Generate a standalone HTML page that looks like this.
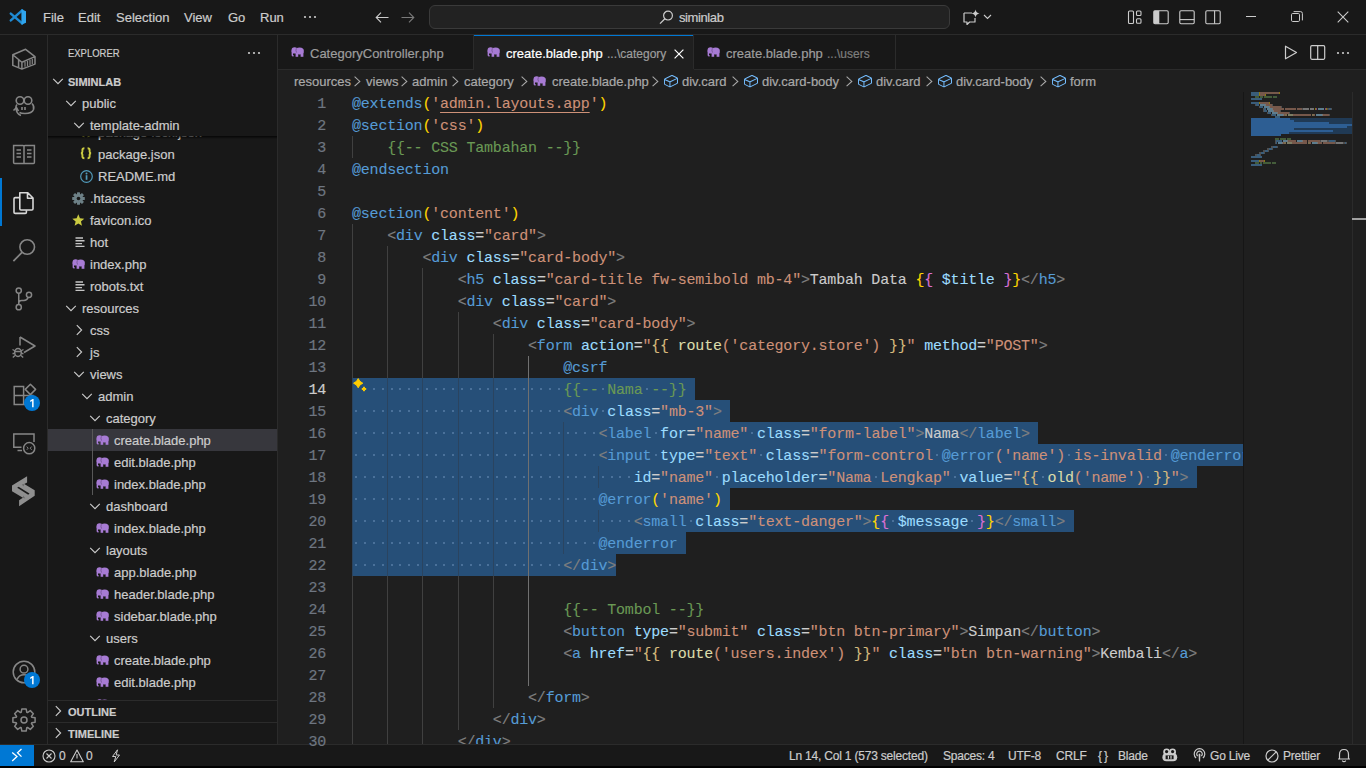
<!DOCTYPE html><html><head><meta charset="utf-8"><style>
*{box-sizing:border-box}
html,body{margin:0;padding:0}
body{width:1366px;height:768px;overflow:hidden;background:#000;position:relative;font-family:"Liberation Sans",sans-serif;color:#cccccc;-webkit-text-stroke:0.2px}
.a{position:absolute}
.t{position:absolute;white-space:pre}
svg{position:absolute;overflow:visible}
#code{position:absolute;left:352px;top:92px;width:891px;height:652px;overflow:hidden;font-family:"Liberation Mono",monospace;font-size:15px;letter-spacing:-0.2px;line-height:22px;white-space:pre}
.ln{position:absolute;left:0;height:22px}
.num{position:absolute;font-family:"Liberation Mono",monospace;font-size:15px;letter-spacing:-0.2px;line-height:22px;color:#6e7681;text-align:right;width:60px;left:266px}
.g{position:absolute;width:1px}
.sel{position:absolute;background:#264f78}
.tree{position:absolute;height:22px;font-size:13px;line-height:22px;color:#cccccc;white-space:pre}
.bc{position:absolute;top:71px;height:22px;line-height:22px;font-size:13px;color:#a9a9a9;white-space:pre}
.sb{position:absolute;top:746px;height:21px;line-height:21px;font-size:12px;color:#cccccc;white-space:pre;letter-spacing:-0.2px}
.mm{position:absolute;height:2px}
</style></head><body>
<div class="a" style="left:0px;top:0px;width:1366px;height:34px;background:#181818;"></div>
<div class="a" style="left:0px;top:34px;width:1366px;height:1px;background:#2b2b2b;"></div>
<div class="a" style="left:0px;top:35px;width:47px;height:709px;background:#181818;"></div>
<div class="a" style="left:47px;top:35px;width:1px;height:709px;background:#2b2b2b;"></div>
<div class="a" style="left:48px;top:35px;width:229px;height:709px;background:#181818;"></div>
<div class="a" style="left:277px;top:35px;width:1px;height:709px;background:#2b2b2b;"></div>
<div class="a" style="left:278px;top:35px;width:1088px;height:709px;background:#1f1f1f;"></div>
<div class="a" style="left:278px;top:35px;width:1088px;height:34px;background:#181818;"></div>
<div class="a" style="left:278px;top:69px;width:1088px;height:1px;background:#2b2b2b;"></div>
<div class="a" style="left:0px;top:744px;width:1366px;height:1px;background:#2b2b2b;"></div>
<div class="a" style="left:0px;top:745px;width:1366px;height:21px;background:#181818;"></div>
<div class="a" style="left:0px;top:745px;width:34px;height:21px;background:#0078d4;"></div>
<div class="num" style="top:94px;color:#6e7681">1</div>
<div class="num" style="top:116px;color:#6e7681">2</div>
<div class="num" style="top:138px;color:#6e7681">3</div>
<div class="num" style="top:160px;color:#6e7681">4</div>
<div class="num" style="top:182px;color:#6e7681">5</div>
<div class="num" style="top:204px;color:#6e7681">6</div>
<div class="num" style="top:226px;color:#6e7681">7</div>
<div class="num" style="top:248px;color:#6e7681">8</div>
<div class="num" style="top:270px;color:#6e7681">9</div>
<div class="num" style="top:292px;color:#6e7681">10</div>
<div class="num" style="top:314px;color:#6e7681">11</div>
<div class="num" style="top:336px;color:#6e7681">12</div>
<div class="num" style="top:358px;color:#6e7681">13</div>
<div class="num" style="top:380px;color:#cccccc">14</div>
<div class="num" style="top:402px;color:#6e7681">15</div>
<div class="num" style="top:424px;color:#6e7681">16</div>
<div class="num" style="top:446px;color:#6e7681">17</div>
<div class="num" style="top:468px;color:#6e7681">18</div>
<div class="num" style="top:490px;color:#6e7681">19</div>
<div class="num" style="top:512px;color:#6e7681">20</div>
<div class="num" style="top:534px;color:#6e7681">21</div>
<div class="num" style="top:556px;color:#6e7681">22</div>
<div class="num" style="top:578px;color:#6e7681">23</div>
<div class="num" style="top:600px;color:#6e7681">24</div>
<div class="num" style="top:622px;color:#6e7681">25</div>
<div class="num" style="top:644px;color:#6e7681">26</div>
<div class="num" style="top:666px;color:#6e7681">27</div>
<div class="num" style="top:688px;color:#6e7681">28</div>
<div class="num" style="top:710px;color:#6e7681">29</div>
<div class="num" style="top:732px;color:#6e7681">30</div>
<div class="a" style="left:278px;top:92px;width:965px;height:652px;overflow:hidden">
<div class="sel" style="left:74px;top:286px;width:343.2px;height:22px"></div>
<div class="sel" style="left:74px;top:308px;width:378.4px;height:22px"></div>
<div class="sel" style="left:74px;top:330px;width:686.4px;height:22px"></div>
<div class="sel" style="left:74px;top:352px;width:915.2px;height:22px"></div>
<div class="sel" style="left:74px;top:374px;width:844.8px;height:22px"></div>
<div class="sel" style="left:74px;top:396px;width:378.4px;height:22px"></div>
<div class="sel" style="left:74px;top:418px;width:721.6px;height:22px"></div>
<div class="sel" style="left:74px;top:440px;width:334.4px;height:22px"></div>
<div class="sel" style="left:74px;top:462px;width:264.0px;height:22px"></div>
<div class="a" style="left:95.0px;top:296px;width:2px;height:2px;background:#4a719a"></div><div class="a" style="left:103.8px;top:296px;width:2px;height:2px;background:#4a719a"></div><div class="a" style="left:112.6px;top:296px;width:2px;height:2px;background:#4a719a"></div><div class="a" style="left:121.4px;top:296px;width:2px;height:2px;background:#4a719a"></div><div class="a" style="left:130.2px;top:296px;width:2px;height:2px;background:#4a719a"></div><div class="a" style="left:139.0px;top:296px;width:2px;height:2px;background:#4a719a"></div><div class="a" style="left:147.8px;top:296px;width:2px;height:2px;background:#4a719a"></div><div class="a" style="left:156.6px;top:296px;width:2px;height:2px;background:#4a719a"></div><div class="a" style="left:165.4px;top:296px;width:2px;height:2px;background:#4a719a"></div><div class="a" style="left:174.2px;top:296px;width:2px;height:2px;background:#4a719a"></div><div class="a" style="left:183.0px;top:296px;width:2px;height:2px;background:#4a719a"></div><div class="a" style="left:191.8px;top:296px;width:2px;height:2px;background:#4a719a"></div><div class="a" style="left:200.6px;top:296px;width:2px;height:2px;background:#4a719a"></div><div class="a" style="left:209.4px;top:296px;width:2px;height:2px;background:#4a719a"></div><div class="a" style="left:218.2px;top:296px;width:2px;height:2px;background:#4a719a"></div><div class="a" style="left:227.0px;top:296px;width:2px;height:2px;background:#4a719a"></div><div class="a" style="left:235.8px;top:296px;width:2px;height:2px;background:#4a719a"></div><div class="a" style="left:244.6px;top:296px;width:2px;height:2px;background:#4a719a"></div><div class="a" style="left:253.4px;top:296px;width:2px;height:2px;background:#4a719a"></div><div class="a" style="left:262.2px;top:296px;width:2px;height:2px;background:#4a719a"></div><div class="a" style="left:271.0px;top:296px;width:2px;height:2px;background:#4a719a"></div><div class="a" style="left:279.8px;top:296px;width:2px;height:2px;background:#4a719a"></div><div class="a" style="left:323.8px;top:296px;width:2px;height:2px;background:#4a719a"></div><div class="a" style="left:367.8px;top:296px;width:2px;height:2px;background:#4a719a"></div><div class="a" style="left:77.4px;top:318px;width:2px;height:2px;background:#4a719a"></div><div class="a" style="left:86.2px;top:318px;width:2px;height:2px;background:#4a719a"></div><div class="a" style="left:95.0px;top:318px;width:2px;height:2px;background:#4a719a"></div><div class="a" style="left:103.8px;top:318px;width:2px;height:2px;background:#4a719a"></div><div class="a" style="left:112.6px;top:318px;width:2px;height:2px;background:#4a719a"></div><div class="a" style="left:121.4px;top:318px;width:2px;height:2px;background:#4a719a"></div><div class="a" style="left:130.2px;top:318px;width:2px;height:2px;background:#4a719a"></div><div class="a" style="left:139.0px;top:318px;width:2px;height:2px;background:#4a719a"></div><div class="a" style="left:147.8px;top:318px;width:2px;height:2px;background:#4a719a"></div><div class="a" style="left:156.6px;top:318px;width:2px;height:2px;background:#4a719a"></div><div class="a" style="left:165.4px;top:318px;width:2px;height:2px;background:#4a719a"></div><div class="a" style="left:174.2px;top:318px;width:2px;height:2px;background:#4a719a"></div><div class="a" style="left:183.0px;top:318px;width:2px;height:2px;background:#4a719a"></div><div class="a" style="left:191.8px;top:318px;width:2px;height:2px;background:#4a719a"></div><div class="a" style="left:200.6px;top:318px;width:2px;height:2px;background:#4a719a"></div><div class="a" style="left:209.4px;top:318px;width:2px;height:2px;background:#4a719a"></div><div class="a" style="left:218.2px;top:318px;width:2px;height:2px;background:#4a719a"></div><div class="a" style="left:227.0px;top:318px;width:2px;height:2px;background:#4a719a"></div><div class="a" style="left:235.8px;top:318px;width:2px;height:2px;background:#4a719a"></div><div class="a" style="left:244.6px;top:318px;width:2px;height:2px;background:#4a719a"></div><div class="a" style="left:253.4px;top:318px;width:2px;height:2px;background:#4a719a"></div><div class="a" style="left:262.2px;top:318px;width:2px;height:2px;background:#4a719a"></div><div class="a" style="left:271.0px;top:318px;width:2px;height:2px;background:#4a719a"></div><div class="a" style="left:279.8px;top:318px;width:2px;height:2px;background:#4a719a"></div><div class="a" style="left:323.8px;top:318px;width:2px;height:2px;background:#4a719a"></div><div class="a" style="left:77.4px;top:340px;width:2px;height:2px;background:#4a719a"></div><div class="a" style="left:86.2px;top:340px;width:2px;height:2px;background:#4a719a"></div><div class="a" style="left:95.0px;top:340px;width:2px;height:2px;background:#4a719a"></div><div class="a" style="left:103.8px;top:340px;width:2px;height:2px;background:#4a719a"></div><div class="a" style="left:112.6px;top:340px;width:2px;height:2px;background:#4a719a"></div><div class="a" style="left:121.4px;top:340px;width:2px;height:2px;background:#4a719a"></div><div class="a" style="left:130.2px;top:340px;width:2px;height:2px;background:#4a719a"></div><div class="a" style="left:139.0px;top:340px;width:2px;height:2px;background:#4a719a"></div><div class="a" style="left:147.8px;top:340px;width:2px;height:2px;background:#4a719a"></div><div class="a" style="left:156.6px;top:340px;width:2px;height:2px;background:#4a719a"></div><div class="a" style="left:165.4px;top:340px;width:2px;height:2px;background:#4a719a"></div><div class="a" style="left:174.2px;top:340px;width:2px;height:2px;background:#4a719a"></div><div class="a" style="left:183.0px;top:340px;width:2px;height:2px;background:#4a719a"></div><div class="a" style="left:191.8px;top:340px;width:2px;height:2px;background:#4a719a"></div><div class="a" style="left:200.6px;top:340px;width:2px;height:2px;background:#4a719a"></div><div class="a" style="left:209.4px;top:340px;width:2px;height:2px;background:#4a719a"></div><div class="a" style="left:218.2px;top:340px;width:2px;height:2px;background:#4a719a"></div><div class="a" style="left:227.0px;top:340px;width:2px;height:2px;background:#4a719a"></div><div class="a" style="left:235.8px;top:340px;width:2px;height:2px;background:#4a719a"></div><div class="a" style="left:244.6px;top:340px;width:2px;height:2px;background:#4a719a"></div><div class="a" style="left:253.4px;top:340px;width:2px;height:2px;background:#4a719a"></div><div class="a" style="left:262.2px;top:340px;width:2px;height:2px;background:#4a719a"></div><div class="a" style="left:271.0px;top:340px;width:2px;height:2px;background:#4a719a"></div><div class="a" style="left:279.8px;top:340px;width:2px;height:2px;background:#4a719a"></div><div class="a" style="left:288.6px;top:340px;width:2px;height:2px;background:#4a719a"></div><div class="a" style="left:297.4px;top:340px;width:2px;height:2px;background:#4a719a"></div><div class="a" style="left:306.2px;top:340px;width:2px;height:2px;background:#4a719a"></div><div class="a" style="left:315.0px;top:340px;width:2px;height:2px;background:#4a719a"></div><div class="a" style="left:376.6px;top:340px;width:2px;height:2px;background:#4a719a"></div><div class="a" style="left:473.4px;top:340px;width:2px;height:2px;background:#4a719a"></div><div class="a" style="left:77.4px;top:362px;width:2px;height:2px;background:#4a719a"></div><div class="a" style="left:86.2px;top:362px;width:2px;height:2px;background:#4a719a"></div><div class="a" style="left:95.0px;top:362px;width:2px;height:2px;background:#4a719a"></div><div class="a" style="left:103.8px;top:362px;width:2px;height:2px;background:#4a719a"></div><div class="a" style="left:112.6px;top:362px;width:2px;height:2px;background:#4a719a"></div><div class="a" style="left:121.4px;top:362px;width:2px;height:2px;background:#4a719a"></div><div class="a" style="left:130.2px;top:362px;width:2px;height:2px;background:#4a719a"></div><div class="a" style="left:139.0px;top:362px;width:2px;height:2px;background:#4a719a"></div><div class="a" style="left:147.8px;top:362px;width:2px;height:2px;background:#4a719a"></div><div class="a" style="left:156.6px;top:362px;width:2px;height:2px;background:#4a719a"></div><div class="a" style="left:165.4px;top:362px;width:2px;height:2px;background:#4a719a"></div><div class="a" style="left:174.2px;top:362px;width:2px;height:2px;background:#4a719a"></div><div class="a" style="left:183.0px;top:362px;width:2px;height:2px;background:#4a719a"></div><div class="a" style="left:191.8px;top:362px;width:2px;height:2px;background:#4a719a"></div><div class="a" style="left:200.6px;top:362px;width:2px;height:2px;background:#4a719a"></div><div class="a" style="left:209.4px;top:362px;width:2px;height:2px;background:#4a719a"></div><div class="a" style="left:218.2px;top:362px;width:2px;height:2px;background:#4a719a"></div><div class="a" style="left:227.0px;top:362px;width:2px;height:2px;background:#4a719a"></div><div class="a" style="left:235.8px;top:362px;width:2px;height:2px;background:#4a719a"></div><div class="a" style="left:244.6px;top:362px;width:2px;height:2px;background:#4a719a"></div><div class="a" style="left:253.4px;top:362px;width:2px;height:2px;background:#4a719a"></div><div class="a" style="left:262.2px;top:362px;width:2px;height:2px;background:#4a719a"></div><div class="a" style="left:271.0px;top:362px;width:2px;height:2px;background:#4a719a"></div><div class="a" style="left:279.8px;top:362px;width:2px;height:2px;background:#4a719a"></div><div class="a" style="left:288.6px;top:362px;width:2px;height:2px;background:#4a719a"></div><div class="a" style="left:297.4px;top:362px;width:2px;height:2px;background:#4a719a"></div><div class="a" style="left:306.2px;top:362px;width:2px;height:2px;background:#4a719a"></div><div class="a" style="left:315.0px;top:362px;width:2px;height:2px;background:#4a719a"></div><div class="a" style="left:376.6px;top:362px;width:2px;height:2px;background:#4a719a"></div><div class="a" style="left:482.2px;top:362px;width:2px;height:2px;background:#4a719a"></div><div class="a" style="left:658.2px;top:362px;width:2px;height:2px;background:#4a719a"></div><div class="a" style="left:790.2px;top:362px;width:2px;height:2px;background:#4a719a"></div><div class="a" style="left:887.0px;top:362px;width:2px;height:2px;background:#4a719a"></div><div class="a" style="left:77.4px;top:384px;width:2px;height:2px;background:#4a719a"></div><div class="a" style="left:86.2px;top:384px;width:2px;height:2px;background:#4a719a"></div><div class="a" style="left:95.0px;top:384px;width:2px;height:2px;background:#4a719a"></div><div class="a" style="left:103.8px;top:384px;width:2px;height:2px;background:#4a719a"></div><div class="a" style="left:112.6px;top:384px;width:2px;height:2px;background:#4a719a"></div><div class="a" style="left:121.4px;top:384px;width:2px;height:2px;background:#4a719a"></div><div class="a" style="left:130.2px;top:384px;width:2px;height:2px;background:#4a719a"></div><div class="a" style="left:139.0px;top:384px;width:2px;height:2px;background:#4a719a"></div><div class="a" style="left:147.8px;top:384px;width:2px;height:2px;background:#4a719a"></div><div class="a" style="left:156.6px;top:384px;width:2px;height:2px;background:#4a719a"></div><div class="a" style="left:165.4px;top:384px;width:2px;height:2px;background:#4a719a"></div><div class="a" style="left:174.2px;top:384px;width:2px;height:2px;background:#4a719a"></div><div class="a" style="left:183.0px;top:384px;width:2px;height:2px;background:#4a719a"></div><div class="a" style="left:191.8px;top:384px;width:2px;height:2px;background:#4a719a"></div><div class="a" style="left:200.6px;top:384px;width:2px;height:2px;background:#4a719a"></div><div class="a" style="left:209.4px;top:384px;width:2px;height:2px;background:#4a719a"></div><div class="a" style="left:218.2px;top:384px;width:2px;height:2px;background:#4a719a"></div><div class="a" style="left:227.0px;top:384px;width:2px;height:2px;background:#4a719a"></div><div class="a" style="left:235.8px;top:384px;width:2px;height:2px;background:#4a719a"></div><div class="a" style="left:244.6px;top:384px;width:2px;height:2px;background:#4a719a"></div><div class="a" style="left:253.4px;top:384px;width:2px;height:2px;background:#4a719a"></div><div class="a" style="left:262.2px;top:384px;width:2px;height:2px;background:#4a719a"></div><div class="a" style="left:271.0px;top:384px;width:2px;height:2px;background:#4a719a"></div><div class="a" style="left:279.8px;top:384px;width:2px;height:2px;background:#4a719a"></div><div class="a" style="left:288.6px;top:384px;width:2px;height:2px;background:#4a719a"></div><div class="a" style="left:297.4px;top:384px;width:2px;height:2px;background:#4a719a"></div><div class="a" style="left:306.2px;top:384px;width:2px;height:2px;background:#4a719a"></div><div class="a" style="left:315.0px;top:384px;width:2px;height:2px;background:#4a719a"></div><div class="a" style="left:323.8px;top:384px;width:2px;height:2px;background:#4a719a"></div><div class="a" style="left:332.6px;top:384px;width:2px;height:2px;background:#4a719a"></div><div class="a" style="left:341.4px;top:384px;width:2px;height:2px;background:#4a719a"></div><div class="a" style="left:350.2px;top:384px;width:2px;height:2px;background:#4a719a"></div><div class="a" style="left:438.2px;top:384px;width:2px;height:2px;background:#4a719a"></div><div class="a" style="left:596.6px;top:384px;width:2px;height:2px;background:#4a719a"></div><div class="a" style="left:675.8px;top:384px;width:2px;height:2px;background:#4a719a"></div><div class="a" style="left:763.8px;top:384px;width:2px;height:2px;background:#4a719a"></div><div class="a" style="left:869.4px;top:384px;width:2px;height:2px;background:#4a719a"></div><div class="a" style="left:77.4px;top:406px;width:2px;height:2px;background:#4a719a"></div><div class="a" style="left:86.2px;top:406px;width:2px;height:2px;background:#4a719a"></div><div class="a" style="left:95.0px;top:406px;width:2px;height:2px;background:#4a719a"></div><div class="a" style="left:103.8px;top:406px;width:2px;height:2px;background:#4a719a"></div><div class="a" style="left:112.6px;top:406px;width:2px;height:2px;background:#4a719a"></div><div class="a" style="left:121.4px;top:406px;width:2px;height:2px;background:#4a719a"></div><div class="a" style="left:130.2px;top:406px;width:2px;height:2px;background:#4a719a"></div><div class="a" style="left:139.0px;top:406px;width:2px;height:2px;background:#4a719a"></div><div class="a" style="left:147.8px;top:406px;width:2px;height:2px;background:#4a719a"></div><div class="a" style="left:156.6px;top:406px;width:2px;height:2px;background:#4a719a"></div><div class="a" style="left:165.4px;top:406px;width:2px;height:2px;background:#4a719a"></div><div class="a" style="left:174.2px;top:406px;width:2px;height:2px;background:#4a719a"></div><div class="a" style="left:183.0px;top:406px;width:2px;height:2px;background:#4a719a"></div><div class="a" style="left:191.8px;top:406px;width:2px;height:2px;background:#4a719a"></div><div class="a" style="left:200.6px;top:406px;width:2px;height:2px;background:#4a719a"></div><div class="a" style="left:209.4px;top:406px;width:2px;height:2px;background:#4a719a"></div><div class="a" style="left:218.2px;top:406px;width:2px;height:2px;background:#4a719a"></div><div class="a" style="left:227.0px;top:406px;width:2px;height:2px;background:#4a719a"></div><div class="a" style="left:235.8px;top:406px;width:2px;height:2px;background:#4a719a"></div><div class="a" style="left:244.6px;top:406px;width:2px;height:2px;background:#4a719a"></div><div class="a" style="left:253.4px;top:406px;width:2px;height:2px;background:#4a719a"></div><div class="a" style="left:262.2px;top:406px;width:2px;height:2px;background:#4a719a"></div><div class="a" style="left:271.0px;top:406px;width:2px;height:2px;background:#4a719a"></div><div class="a" style="left:279.8px;top:406px;width:2px;height:2px;background:#4a719a"></div><div class="a" style="left:288.6px;top:406px;width:2px;height:2px;background:#4a719a"></div><div class="a" style="left:297.4px;top:406px;width:2px;height:2px;background:#4a719a"></div><div class="a" style="left:306.2px;top:406px;width:2px;height:2px;background:#4a719a"></div><div class="a" style="left:315.0px;top:406px;width:2px;height:2px;background:#4a719a"></div><div class="a" style="left:77.4px;top:428px;width:2px;height:2px;background:#4a719a"></div><div class="a" style="left:86.2px;top:428px;width:2px;height:2px;background:#4a719a"></div><div class="a" style="left:95.0px;top:428px;width:2px;height:2px;background:#4a719a"></div><div class="a" style="left:103.8px;top:428px;width:2px;height:2px;background:#4a719a"></div><div class="a" style="left:112.6px;top:428px;width:2px;height:2px;background:#4a719a"></div><div class="a" style="left:121.4px;top:428px;width:2px;height:2px;background:#4a719a"></div><div class="a" style="left:130.2px;top:428px;width:2px;height:2px;background:#4a719a"></div><div class="a" style="left:139.0px;top:428px;width:2px;height:2px;background:#4a719a"></div><div class="a" style="left:147.8px;top:428px;width:2px;height:2px;background:#4a719a"></div><div class="a" style="left:156.6px;top:428px;width:2px;height:2px;background:#4a719a"></div><div class="a" style="left:165.4px;top:428px;width:2px;height:2px;background:#4a719a"></div><div class="a" style="left:174.2px;top:428px;width:2px;height:2px;background:#4a719a"></div><div class="a" style="left:183.0px;top:428px;width:2px;height:2px;background:#4a719a"></div><div class="a" style="left:191.8px;top:428px;width:2px;height:2px;background:#4a719a"></div><div class="a" style="left:200.6px;top:428px;width:2px;height:2px;background:#4a719a"></div><div class="a" style="left:209.4px;top:428px;width:2px;height:2px;background:#4a719a"></div><div class="a" style="left:218.2px;top:428px;width:2px;height:2px;background:#4a719a"></div><div class="a" style="left:227.0px;top:428px;width:2px;height:2px;background:#4a719a"></div><div class="a" style="left:235.8px;top:428px;width:2px;height:2px;background:#4a719a"></div><div class="a" style="left:244.6px;top:428px;width:2px;height:2px;background:#4a719a"></div><div class="a" style="left:253.4px;top:428px;width:2px;height:2px;background:#4a719a"></div><div class="a" style="left:262.2px;top:428px;width:2px;height:2px;background:#4a719a"></div><div class="a" style="left:271.0px;top:428px;width:2px;height:2px;background:#4a719a"></div><div class="a" style="left:279.8px;top:428px;width:2px;height:2px;background:#4a719a"></div><div class="a" style="left:288.6px;top:428px;width:2px;height:2px;background:#4a719a"></div><div class="a" style="left:297.4px;top:428px;width:2px;height:2px;background:#4a719a"></div><div class="a" style="left:306.2px;top:428px;width:2px;height:2px;background:#4a719a"></div><div class="a" style="left:315.0px;top:428px;width:2px;height:2px;background:#4a719a"></div><div class="a" style="left:323.8px;top:428px;width:2px;height:2px;background:#4a719a"></div><div class="a" style="left:332.6px;top:428px;width:2px;height:2px;background:#4a719a"></div><div class="a" style="left:341.4px;top:428px;width:2px;height:2px;background:#4a719a"></div><div class="a" style="left:350.2px;top:428px;width:2px;height:2px;background:#4a719a"></div><div class="a" style="left:411.8px;top:428px;width:2px;height:2px;background:#4a719a"></div><div class="a" style="left:614.2px;top:428px;width:2px;height:2px;background:#4a719a"></div><div class="a" style="left:693.4px;top:428px;width:2px;height:2px;background:#4a719a"></div><div class="a" style="left:77.4px;top:450px;width:2px;height:2px;background:#4a719a"></div><div class="a" style="left:86.2px;top:450px;width:2px;height:2px;background:#4a719a"></div><div class="a" style="left:95.0px;top:450px;width:2px;height:2px;background:#4a719a"></div><div class="a" style="left:103.8px;top:450px;width:2px;height:2px;background:#4a719a"></div><div class="a" style="left:112.6px;top:450px;width:2px;height:2px;background:#4a719a"></div><div class="a" style="left:121.4px;top:450px;width:2px;height:2px;background:#4a719a"></div><div class="a" style="left:130.2px;top:450px;width:2px;height:2px;background:#4a719a"></div><div class="a" style="left:139.0px;top:450px;width:2px;height:2px;background:#4a719a"></div><div class="a" style="left:147.8px;top:450px;width:2px;height:2px;background:#4a719a"></div><div class="a" style="left:156.6px;top:450px;width:2px;height:2px;background:#4a719a"></div><div class="a" style="left:165.4px;top:450px;width:2px;height:2px;background:#4a719a"></div><div class="a" style="left:174.2px;top:450px;width:2px;height:2px;background:#4a719a"></div><div class="a" style="left:183.0px;top:450px;width:2px;height:2px;background:#4a719a"></div><div class="a" style="left:191.8px;top:450px;width:2px;height:2px;background:#4a719a"></div><div class="a" style="left:200.6px;top:450px;width:2px;height:2px;background:#4a719a"></div><div class="a" style="left:209.4px;top:450px;width:2px;height:2px;background:#4a719a"></div><div class="a" style="left:218.2px;top:450px;width:2px;height:2px;background:#4a719a"></div><div class="a" style="left:227.0px;top:450px;width:2px;height:2px;background:#4a719a"></div><div class="a" style="left:235.8px;top:450px;width:2px;height:2px;background:#4a719a"></div><div class="a" style="left:244.6px;top:450px;width:2px;height:2px;background:#4a719a"></div><div class="a" style="left:253.4px;top:450px;width:2px;height:2px;background:#4a719a"></div><div class="a" style="left:262.2px;top:450px;width:2px;height:2px;background:#4a719a"></div><div class="a" style="left:271.0px;top:450px;width:2px;height:2px;background:#4a719a"></div><div class="a" style="left:279.8px;top:450px;width:2px;height:2px;background:#4a719a"></div><div class="a" style="left:288.6px;top:450px;width:2px;height:2px;background:#4a719a"></div><div class="a" style="left:297.4px;top:450px;width:2px;height:2px;background:#4a719a"></div><div class="a" style="left:306.2px;top:450px;width:2px;height:2px;background:#4a719a"></div><div class="a" style="left:315.0px;top:450px;width:2px;height:2px;background:#4a719a"></div><div class="a" style="left:77.4px;top:472px;width:2px;height:2px;background:#4a719a"></div><div class="a" style="left:86.2px;top:472px;width:2px;height:2px;background:#4a719a"></div><div class="a" style="left:95.0px;top:472px;width:2px;height:2px;background:#4a719a"></div><div class="a" style="left:103.8px;top:472px;width:2px;height:2px;background:#4a719a"></div><div class="a" style="left:112.6px;top:472px;width:2px;height:2px;background:#4a719a"></div><div class="a" style="left:121.4px;top:472px;width:2px;height:2px;background:#4a719a"></div><div class="a" style="left:130.2px;top:472px;width:2px;height:2px;background:#4a719a"></div><div class="a" style="left:139.0px;top:472px;width:2px;height:2px;background:#4a719a"></div><div class="a" style="left:147.8px;top:472px;width:2px;height:2px;background:#4a719a"></div><div class="a" style="left:156.6px;top:472px;width:2px;height:2px;background:#4a719a"></div><div class="a" style="left:165.4px;top:472px;width:2px;height:2px;background:#4a719a"></div><div class="a" style="left:174.2px;top:472px;width:2px;height:2px;background:#4a719a"></div><div class="a" style="left:183.0px;top:472px;width:2px;height:2px;background:#4a719a"></div><div class="a" style="left:191.8px;top:472px;width:2px;height:2px;background:#4a719a"></div><div class="a" style="left:200.6px;top:472px;width:2px;height:2px;background:#4a719a"></div><div class="a" style="left:209.4px;top:472px;width:2px;height:2px;background:#4a719a"></div><div class="a" style="left:218.2px;top:472px;width:2px;height:2px;background:#4a719a"></div><div class="a" style="left:227.0px;top:472px;width:2px;height:2px;background:#4a719a"></div><div class="a" style="left:235.8px;top:472px;width:2px;height:2px;background:#4a719a"></div><div class="a" style="left:244.6px;top:472px;width:2px;height:2px;background:#4a719a"></div><div class="a" style="left:253.4px;top:472px;width:2px;height:2px;background:#4a719a"></div><div class="a" style="left:262.2px;top:472px;width:2px;height:2px;background:#4a719a"></div><div class="a" style="left:271.0px;top:472px;width:2px;height:2px;background:#4a719a"></div><div class="a" style="left:279.8px;top:472px;width:2px;height:2px;background:#4a719a"></div>
<div class="g" style="left:74px;top:44px;height:22px;background:#404040"></div>
<div class="g" style="left:74px;top:132px;height:22px;background:#404040"></div>
<div class="g" style="left:74px;top:154px;height:22px;background:#404040"></div>
<div class="g" style="left:109px;top:154px;height:22px;background:#404040"></div>
<div class="g" style="left:74px;top:176px;height:22px;background:#404040"></div>
<div class="g" style="left:109px;top:176px;height:22px;background:#404040"></div>
<div class="g" style="left:144px;top:176px;height:22px;background:#404040"></div>
<div class="g" style="left:74px;top:198px;height:22px;background:#404040"></div>
<div class="g" style="left:109px;top:198px;height:22px;background:#404040"></div>
<div class="g" style="left:144px;top:198px;height:22px;background:#404040"></div>
<div class="g" style="left:74px;top:220px;height:22px;background:#404040"></div>
<div class="g" style="left:109px;top:220px;height:22px;background:#404040"></div>
<div class="g" style="left:144px;top:220px;height:22px;background:#404040"></div>
<div class="g" style="left:180px;top:220px;height:22px;background:#404040"></div>
<div class="g" style="left:74px;top:242px;height:22px;background:#404040"></div>
<div class="g" style="left:109px;top:242px;height:22px;background:#404040"></div>
<div class="g" style="left:144px;top:242px;height:22px;background:#404040"></div>
<div class="g" style="left:180px;top:242px;height:22px;background:#404040"></div>
<div class="g" style="left:215px;top:242px;height:22px;background:#404040"></div>
<div class="g" style="left:74px;top:264px;height:22px;background:#404040"></div>
<div class="g" style="left:109px;top:264px;height:22px;background:#404040"></div>
<div class="g" style="left:144px;top:264px;height:22px;background:#404040"></div>
<div class="g" style="left:180px;top:264px;height:22px;background:#404040"></div>
<div class="g" style="left:215px;top:264px;height:22px;background:#404040"></div>
<div class="g" style="left:250px;top:264px;height:22px;background:#707070"></div>
<div class="g" style="left:74px;top:286px;height:22px;background:#2a4460"></div>
<div class="g" style="left:109px;top:286px;height:22px;background:#2a4460"></div>
<div class="g" style="left:144px;top:286px;height:22px;background:#2a4460"></div>
<div class="g" style="left:180px;top:286px;height:22px;background:#2a4460"></div>
<div class="g" style="left:215px;top:286px;height:22px;background:#2a4460"></div>
<div class="g" style="left:250px;top:286px;height:22px;background:#707070"></div>
<div class="g" style="left:74px;top:308px;height:22px;background:#2a4460"></div>
<div class="g" style="left:109px;top:308px;height:22px;background:#2a4460"></div>
<div class="g" style="left:144px;top:308px;height:22px;background:#2a4460"></div>
<div class="g" style="left:180px;top:308px;height:22px;background:#2a4460"></div>
<div class="g" style="left:215px;top:308px;height:22px;background:#2a4460"></div>
<div class="g" style="left:250px;top:308px;height:22px;background:#707070"></div>
<div class="g" style="left:74px;top:330px;height:22px;background:#2a4460"></div>
<div class="g" style="left:109px;top:330px;height:22px;background:#2a4460"></div>
<div class="g" style="left:144px;top:330px;height:22px;background:#2a4460"></div>
<div class="g" style="left:180px;top:330px;height:22px;background:#2a4460"></div>
<div class="g" style="left:215px;top:330px;height:22px;background:#2a4460"></div>
<div class="g" style="left:250px;top:330px;height:22px;background:#707070"></div>
<div class="g" style="left:285px;top:330px;height:22px;background:#2a4460"></div>
<div class="g" style="left:74px;top:352px;height:22px;background:#2a4460"></div>
<div class="g" style="left:109px;top:352px;height:22px;background:#2a4460"></div>
<div class="g" style="left:144px;top:352px;height:22px;background:#2a4460"></div>
<div class="g" style="left:180px;top:352px;height:22px;background:#2a4460"></div>
<div class="g" style="left:215px;top:352px;height:22px;background:#2a4460"></div>
<div class="g" style="left:250px;top:352px;height:22px;background:#707070"></div>
<div class="g" style="left:285px;top:352px;height:22px;background:#2a4460"></div>
<div class="g" style="left:74px;top:374px;height:22px;background:#2a4460"></div>
<div class="g" style="left:109px;top:374px;height:22px;background:#2a4460"></div>
<div class="g" style="left:144px;top:374px;height:22px;background:#2a4460"></div>
<div class="g" style="left:180px;top:374px;height:22px;background:#2a4460"></div>
<div class="g" style="left:215px;top:374px;height:22px;background:#2a4460"></div>
<div class="g" style="left:250px;top:374px;height:22px;background:#707070"></div>
<div class="g" style="left:285px;top:374px;height:22px;background:#2a4460"></div>
<div class="g" style="left:320px;top:374px;height:22px;background:#2a4460"></div>
<div class="g" style="left:74px;top:396px;height:22px;background:#2a4460"></div>
<div class="g" style="left:109px;top:396px;height:22px;background:#2a4460"></div>
<div class="g" style="left:144px;top:396px;height:22px;background:#2a4460"></div>
<div class="g" style="left:180px;top:396px;height:22px;background:#2a4460"></div>
<div class="g" style="left:215px;top:396px;height:22px;background:#2a4460"></div>
<div class="g" style="left:250px;top:396px;height:22px;background:#707070"></div>
<div class="g" style="left:285px;top:396px;height:22px;background:#2a4460"></div>
<div class="g" style="left:74px;top:418px;height:22px;background:#2a4460"></div>
<div class="g" style="left:109px;top:418px;height:22px;background:#2a4460"></div>
<div class="g" style="left:144px;top:418px;height:22px;background:#2a4460"></div>
<div class="g" style="left:180px;top:418px;height:22px;background:#2a4460"></div>
<div class="g" style="left:215px;top:418px;height:22px;background:#2a4460"></div>
<div class="g" style="left:250px;top:418px;height:22px;background:#707070"></div>
<div class="g" style="left:285px;top:418px;height:22px;background:#2a4460"></div>
<div class="g" style="left:320px;top:418px;height:22px;background:#2a4460"></div>
<div class="g" style="left:74px;top:440px;height:22px;background:#2a4460"></div>
<div class="g" style="left:109px;top:440px;height:22px;background:#2a4460"></div>
<div class="g" style="left:144px;top:440px;height:22px;background:#2a4460"></div>
<div class="g" style="left:180px;top:440px;height:22px;background:#2a4460"></div>
<div class="g" style="left:215px;top:440px;height:22px;background:#2a4460"></div>
<div class="g" style="left:250px;top:440px;height:22px;background:#707070"></div>
<div class="g" style="left:285px;top:440px;height:22px;background:#2a4460"></div>
<div class="g" style="left:74px;top:462px;height:22px;background:#2a4460"></div>
<div class="g" style="left:109px;top:462px;height:22px;background:#2a4460"></div>
<div class="g" style="left:144px;top:462px;height:22px;background:#2a4460"></div>
<div class="g" style="left:180px;top:462px;height:22px;background:#2a4460"></div>
<div class="g" style="left:215px;top:462px;height:22px;background:#2a4460"></div>
<div class="g" style="left:250px;top:462px;height:22px;background:#707070"></div>
<div class="g" style="left:74px;top:484px;height:22px;background:#404040"></div>
<div class="g" style="left:109px;top:484px;height:22px;background:#404040"></div>
<div class="g" style="left:144px;top:484px;height:22px;background:#404040"></div>
<div class="g" style="left:180px;top:484px;height:22px;background:#404040"></div>
<div class="g" style="left:215px;top:484px;height:22px;background:#404040"></div>
<div class="g" style="left:250px;top:484px;height:22px;background:#707070"></div>
<div class="g" style="left:74px;top:506px;height:22px;background:#404040"></div>
<div class="g" style="left:109px;top:506px;height:22px;background:#404040"></div>
<div class="g" style="left:144px;top:506px;height:22px;background:#404040"></div>
<div class="g" style="left:180px;top:506px;height:22px;background:#404040"></div>
<div class="g" style="left:215px;top:506px;height:22px;background:#404040"></div>
<div class="g" style="left:250px;top:506px;height:22px;background:#707070"></div>
<div class="g" style="left:74px;top:528px;height:22px;background:#404040"></div>
<div class="g" style="left:109px;top:528px;height:22px;background:#404040"></div>
<div class="g" style="left:144px;top:528px;height:22px;background:#404040"></div>
<div class="g" style="left:180px;top:528px;height:22px;background:#404040"></div>
<div class="g" style="left:215px;top:528px;height:22px;background:#404040"></div>
<div class="g" style="left:250px;top:528px;height:22px;background:#707070"></div>
<div class="g" style="left:74px;top:550px;height:22px;background:#404040"></div>
<div class="g" style="left:109px;top:550px;height:22px;background:#404040"></div>
<div class="g" style="left:144px;top:550px;height:22px;background:#404040"></div>
<div class="g" style="left:180px;top:550px;height:22px;background:#404040"></div>
<div class="g" style="left:215px;top:550px;height:22px;background:#404040"></div>
<div class="g" style="left:250px;top:550px;height:22px;background:#707070"></div>
<div class="g" style="left:74px;top:572px;height:22px;background:#404040"></div>
<div class="g" style="left:109px;top:572px;height:22px;background:#404040"></div>
<div class="g" style="left:144px;top:572px;height:22px;background:#404040"></div>
<div class="g" style="left:180px;top:572px;height:22px;background:#404040"></div>
<div class="g" style="left:215px;top:572px;height:22px;background:#404040"></div>
<div class="g" style="left:250px;top:572px;height:22px;background:#707070"></div>
<div class="g" style="left:74px;top:594px;height:22px;background:#404040"></div>
<div class="g" style="left:109px;top:594px;height:22px;background:#404040"></div>
<div class="g" style="left:144px;top:594px;height:22px;background:#404040"></div>
<div class="g" style="left:180px;top:594px;height:22px;background:#404040"></div>
<div class="g" style="left:215px;top:594px;height:22px;background:#404040"></div>
<div class="g" style="left:74px;top:616px;height:22px;background:#404040"></div>
<div class="g" style="left:109px;top:616px;height:22px;background:#404040"></div>
<div class="g" style="left:144px;top:616px;height:22px;background:#404040"></div>
<div class="g" style="left:180px;top:616px;height:22px;background:#404040"></div>
<div class="g" style="left:74px;top:638px;height:22px;background:#404040"></div>
<div class="g" style="left:109px;top:638px;height:22px;background:#404040"></div>
<div class="g" style="left:144px;top:638px;height:22px;background:#404040"></div>
<div style="position:absolute;left:74px;top:0;font-family:'Liberation Mono',monospace;font-size:15px;letter-spacing:-0.2px;line-height:22px;white-space:pre;-webkit-text-stroke:0.1px">
<div class="ln" style="top:2px"><span style="color:#569CD6">@extends</span><span style="color:#FFD700">(</span><span style="color:#CE9178">'<span style="text-decoration:underline;text-underline-offset:4px">admin.layouts.app</span>'</span><span style="color:#FFD700">)</span></div>
<div class="ln" style="top:24px"><span style="color:#569CD6">@section</span><span style="color:#FFD700">(</span><span style="color:#CE9178">&#x27;css&#x27;</span><span style="color:#FFD700">)</span></div>
<div class="ln" style="top:46px"><span style="color:#CCCCCC">    </span><span style="color:#6A9955">{{-- CSS Tambahan --}}</span></div>
<div class="ln" style="top:68px"><span style="color:#569CD6">@endsection</span></div>
<div class="ln" style="top:90px"></div>
<div class="ln" style="top:112px"><span style="color:#569CD6">@section</span><span style="color:#FFD700">(</span><span style="color:#CE9178">&#x27;content&#x27;</span><span style="color:#FFD700">)</span></div>
<div class="ln" style="top:134px"><span style="color:#CCCCCC">    </span><span style="color:#808080">&lt;</span><span style="color:#569CD6">div</span><span style="color:#CCCCCC"> </span><span style="color:#9CDCFE">class</span><span style="color:#CCCCCC">=</span><span style="color:#CE9178">&quot;card&quot;</span><span style="color:#808080">&gt;</span></div>
<div class="ln" style="top:156px"><span style="color:#CCCCCC">        </span><span style="color:#808080">&lt;</span><span style="color:#569CD6">div</span><span style="color:#CCCCCC"> </span><span style="color:#9CDCFE">class</span><span style="color:#CCCCCC">=</span><span style="color:#CE9178">&quot;card-body&quot;</span><span style="color:#808080">&gt;</span></div>
<div class="ln" style="top:178px"><span style="color:#CCCCCC">            </span><span style="color:#808080">&lt;</span><span style="color:#569CD6">h5</span><span style="color:#CCCCCC"> </span><span style="color:#9CDCFE">class</span><span style="color:#CCCCCC">=</span><span style="color:#CE9178">&quot;card-title fw-semibold mb-4&quot;</span><span style="color:#808080">&gt;</span><span style="color:#CCCCCC">Tambah Data </span><span style="color:#FFD700">{</span><span style="color:#DA70D6">{</span><span style="color:#CCCCCC"> </span><span style="color:#9CDCFE">$title</span><span style="color:#CCCCCC"> </span><span style="color:#DA70D6">}</span><span style="color:#FFD700">}</span><span style="color:#808080">&lt;/</span><span style="color:#569CD6">h5</span><span style="color:#808080">&gt;</span></div>
<div class="ln" style="top:200px"><span style="color:#CCCCCC">            </span><span style="color:#808080">&lt;</span><span style="color:#569CD6">div</span><span style="color:#CCCCCC"> </span><span style="color:#9CDCFE">class</span><span style="color:#CCCCCC">=</span><span style="color:#CE9178">&quot;card&quot;</span><span style="color:#808080">&gt;</span></div>
<div class="ln" style="top:222px"><span style="color:#CCCCCC">                </span><span style="color:#808080">&lt;</span><span style="color:#569CD6">div</span><span style="color:#CCCCCC"> </span><span style="color:#9CDCFE">class</span><span style="color:#CCCCCC">=</span><span style="color:#CE9178">&quot;card-body&quot;</span><span style="color:#808080">&gt;</span></div>
<div class="ln" style="top:244px"><span style="color:#CCCCCC">                    </span><span style="color:#808080">&lt;</span><span style="color:#569CD6">form</span><span style="color:#CCCCCC"> </span><span style="color:#9CDCFE">action</span><span style="color:#CCCCCC">=</span><span style="color:#CE9178">&quot;</span><span style="color:#D7BA7D">{{</span><span style="color:#CCCCCC"> </span><span style="color:#DCDCAA">route</span><span style="color:#CE9178">(&#x27;category.store&#x27;)</span><span style="color:#CCCCCC"> </span><span style="color:#D7BA7D">}}</span><span style="color:#CE9178">&quot;</span><span style="color:#CCCCCC"> </span><span style="color:#9CDCFE">method</span><span style="color:#CCCCCC">=</span><span style="color:#CE9178">&quot;POST&quot;</span><span style="color:#808080">&gt;</span></div>
<div class="ln" style="top:266px"><span style="color:#CCCCCC">                        </span><span style="color:#569CD6">@csrf</span></div>
<div class="ln" style="top:288px"><span style="color:#CCCCCC">                        </span><span style="color:#6A9955">{{-- Nama --}}</span></div>
<div class="ln" style="top:310px"><span style="color:#CCCCCC">                        </span><span style="color:#808080">&lt;</span><span style="color:#569CD6">div</span><span style="color:#CCCCCC"> </span><span style="color:#9CDCFE">class</span><span style="color:#CCCCCC">=</span><span style="color:#CE9178">&quot;mb-3&quot;</span><span style="color:#808080">&gt;</span></div>
<div class="ln" style="top:332px"><span style="color:#CCCCCC">                            </span><span style="color:#808080">&lt;</span><span style="color:#569CD6">label</span><span style="color:#CCCCCC"> </span><span style="color:#9CDCFE">for</span><span style="color:#CCCCCC">=</span><span style="color:#CE9178">&quot;name&quot;</span><span style="color:#CCCCCC"> </span><span style="color:#9CDCFE">class</span><span style="color:#CCCCCC">=</span><span style="color:#CE9178">&quot;form-label&quot;</span><span style="color:#808080">&gt;</span><span style="color:#CCCCCC">Nama</span><span style="color:#808080">&lt;/</span><span style="color:#569CD6">label</span><span style="color:#808080">&gt;</span></div>
<div class="ln" style="top:354px"><span style="color:#CCCCCC">                            </span><span style="color:#808080">&lt;</span><span style="color:#569CD6">input</span><span style="color:#CCCCCC"> </span><span style="color:#9CDCFE">type</span><span style="color:#CCCCCC">=</span><span style="color:#CE9178">&quot;text&quot;</span><span style="color:#CCCCCC"> </span><span style="color:#9CDCFE">class</span><span style="color:#CCCCCC">=</span><span style="color:#CE9178">&quot;form-control </span><span style="color:#569CD6">@error</span><span style="color:#CE9178">(&#x27;name&#x27;)</span><span style="color:#CE9178"> is-invalid </span><span style="color:#569CD6">@enderror</span><span style="color:#CE9178">&quot;</span></div>
<div class="ln" style="top:376px"><span style="color:#CCCCCC">                                </span><span style="color:#9CDCFE">id</span><span style="color:#CCCCCC">=</span><span style="color:#CE9178">&quot;name&quot;</span><span style="color:#CCCCCC"> </span><span style="color:#9CDCFE">placeholder</span><span style="color:#CCCCCC">=</span><span style="color:#CE9178">&quot;Nama Lengkap&quot;</span><span style="color:#CCCCCC"> </span><span style="color:#9CDCFE">value</span><span style="color:#CCCCCC">=</span><span style="color:#CE9178">&quot;</span><span style="color:#D7BA7D">{{</span><span style="color:#CCCCCC"> </span><span style="color:#DCDCAA">old</span><span style="color:#CE9178">(&#x27;name&#x27;)</span><span style="color:#CCCCCC"> </span><span style="color:#D7BA7D">}}</span><span style="color:#CE9178">&quot;</span><span style="color:#808080">&gt;</span></div>
<div class="ln" style="top:398px"><span style="color:#CCCCCC">                            </span><span style="color:#569CD6">@error</span><span style="color:#FFD700">(</span><span style="color:#CE9178">&#x27;name&#x27;</span><span style="color:#FFD700">)</span></div>
<div class="ln" style="top:420px"><span style="color:#CCCCCC">                                </span><span style="color:#808080">&lt;</span><span style="color:#569CD6">small</span><span style="color:#CCCCCC"> </span><span style="color:#9CDCFE">class</span><span style="color:#CCCCCC">=</span><span style="color:#CE9178">&quot;text-danger&quot;</span><span style="color:#808080">&gt;</span><span style="color:#FFD700">{</span><span style="color:#DA70D6">{</span><span style="color:#CCCCCC"> </span><span style="color:#9CDCFE">$message</span><span style="color:#CCCCCC"> </span><span style="color:#DA70D6">}</span><span style="color:#FFD700">}</span><span style="color:#808080">&lt;/</span><span style="color:#569CD6">small</span><span style="color:#808080">&gt;</span></div>
<div class="ln" style="top:442px"><span style="color:#CCCCCC">                            </span><span style="color:#569CD6">@enderror</span></div>
<div class="ln" style="top:464px"><span style="color:#CCCCCC">                        </span><span style="color:#808080">&lt;/</span><span style="color:#569CD6">div</span><span style="color:#808080">&gt;</span></div>
<div class="ln" style="top:486px"></div>
<div class="ln" style="top:508px"><span style="color:#CCCCCC">                        </span><span style="color:#6A9955">{{-- Tombol --}}</span></div>
<div class="ln" style="top:530px"><span style="color:#CCCCCC">                        </span><span style="color:#808080">&lt;</span><span style="color:#569CD6">button</span><span style="color:#CCCCCC"> </span><span style="color:#9CDCFE">type</span><span style="color:#CCCCCC">=</span><span style="color:#CE9178">&quot;submit&quot;</span><span style="color:#CCCCCC"> </span><span style="color:#9CDCFE">class</span><span style="color:#CCCCCC">=</span><span style="color:#CE9178">&quot;btn btn-primary&quot;</span><span style="color:#808080">&gt;</span><span style="color:#CCCCCC">Simpan</span><span style="color:#808080">&lt;/</span><span style="color:#569CD6">button</span><span style="color:#808080">&gt;</span></div>
<div class="ln" style="top:552px"><span style="color:#CCCCCC">                        </span><span style="color:#808080">&lt;</span><span style="color:#569CD6">a</span><span style="color:#CCCCCC"> </span><span style="color:#9CDCFE">href</span><span style="color:#CCCCCC">=</span><span style="color:#CE9178">&quot;</span><span style="color:#D7BA7D">{{</span><span style="color:#CCCCCC"> </span><span style="color:#DCDCAA">route</span><span style="color:#CE9178">(&#x27;users.index&#x27;)</span><span style="color:#CCCCCC"> </span><span style="color:#D7BA7D">}}</span><span style="color:#CE9178">&quot;</span><span style="color:#CCCCCC"> </span><span style="color:#9CDCFE">class</span><span style="color:#CCCCCC">=</span><span style="color:#CE9178">&quot;btn btn-warning&quot;</span><span style="color:#808080">&gt;</span><span style="color:#CCCCCC">Kembali</span><span style="color:#808080">&lt;/</span><span style="color:#569CD6">a</span><span style="color:#808080">&gt;</span></div>
<div class="ln" style="top:574px"></div>
<div class="ln" style="top:596px"><span style="color:#CCCCCC">                    </span><span style="color:#808080">&lt;/</span><span style="color:#569CD6">form</span><span style="color:#808080">&gt;</span></div>
<div class="ln" style="top:618px"><span style="color:#CCCCCC">                </span><span style="color:#808080">&lt;/</span><span style="color:#569CD6">div</span><span style="color:#808080">&gt;</span></div>
<div class="ln" style="top:640px"><span style="color:#CCCCCC">            </span><span style="color:#808080">&lt;/</span><span style="color:#569CD6">div</span><span style="color:#808080">&gt;</span></div>
</div>
<svg style="left:74px;top:285px" width="16" height="16" viewBox="0 0 16 16" ><path d="M6.2,1.6 Q7.3,4.9 10.8,6.2 Q7.3,7.5 6.2,10.8 Q5.1,7.5 1.6,6.2 Q5.1,4.9 6.2,1.6Z" fill="#ffcc00" stroke="#ffcc00" stroke-width="1" stroke-linejoin="round"/><path d="M12,9.8 Q12.6,11.4 14.2,12 Q12.6,12.6 12,14.2 Q11.4,12.6 9.8,12 Q11.4,11.4 12,9.8Z" fill="#ffcc00" stroke="#ffcc00" stroke-width="1" stroke-linejoin="round"/></svg>
</div>
<div class="a" style="left:1243px;top:92px;width:1px;height:652px;background:#161616;"></div>
<div class="a" style="left:1352px;top:92px;width:1px;height:652px;background:#2b2b2b;"></div>
<div class="a" style="left:1352px;top:218px;width:14px;height:2px;background:#a0a0a0;"></div>
<div class="a" style="left:1244px;top:92px;width:108px;height:652px;overflow:hidden"><div class="mm" style="left:7px;top:0px;width:8px;background:#569CD6;opacity:.5"></div><div class="mm" style="left:15px;top:0px;width:1px;background:#FFD700;opacity:.5"></div><div class="mm" style="left:16px;top:0px;width:19px;background:#CE9178;opacity:.5"></div><div class="mm" style="left:35px;top:0px;width:1px;background:#FFD700;opacity:.5"></div><div class="mm" style="left:7px;top:2px;width:8px;background:#569CD6;opacity:.5"></div><div class="mm" style="left:15px;top:2px;width:1px;background:#FFD700;opacity:.5"></div><div class="mm" style="left:16px;top:2px;width:5px;background:#CE9178;opacity:.5"></div><div class="mm" style="left:21px;top:2px;width:1px;background:#FFD700;opacity:.5"></div><div class="mm" style="left:11px;top:4px;width:4px;background:#6A9955;opacity:.5"></div><div class="mm" style="left:16px;top:4px;width:3px;background:#6A9955;opacity:.5"></div><div class="mm" style="left:20px;top:4px;width:8px;background:#6A9955;opacity:.5"></div><div class="mm" style="left:29px;top:4px;width:4px;background:#6A9955;opacity:.5"></div><div class="mm" style="left:7px;top:6px;width:11px;background:#569CD6;opacity:.5"></div><div class="mm" style="left:7px;top:10px;width:8px;background:#569CD6;opacity:.5"></div><div class="mm" style="left:15px;top:10px;width:1px;background:#FFD700;opacity:.5"></div><div class="mm" style="left:16px;top:10px;width:9px;background:#CE9178;opacity:.5"></div><div class="mm" style="left:25px;top:10px;width:1px;background:#FFD700;opacity:.5"></div><div class="mm" style="left:11px;top:12px;width:1px;background:#808080;opacity:.5"></div><div class="mm" style="left:12px;top:12px;width:3px;background:#569CD6;opacity:.5"></div><div class="mm" style="left:16px;top:12px;width:5px;background:#9CDCFE;opacity:.5"></div><div class="mm" style="left:21px;top:12px;width:1px;background:#CCCCCC;opacity:.5"></div><div class="mm" style="left:22px;top:12px;width:6px;background:#CE9178;opacity:.5"></div><div class="mm" style="left:28px;top:12px;width:1px;background:#808080;opacity:.5"></div><div class="mm" style="left:15px;top:14px;width:1px;background:#808080;opacity:.5"></div><div class="mm" style="left:16px;top:14px;width:3px;background:#569CD6;opacity:.5"></div><div class="mm" style="left:20px;top:14px;width:5px;background:#9CDCFE;opacity:.5"></div><div class="mm" style="left:25px;top:14px;width:1px;background:#CCCCCC;opacity:.5"></div><div class="mm" style="left:26px;top:14px;width:11px;background:#CE9178;opacity:.5"></div><div class="mm" style="left:37px;top:14px;width:1px;background:#808080;opacity:.5"></div><div class="mm" style="left:19px;top:16px;width:1px;background:#808080;opacity:.5"></div><div class="mm" style="left:20px;top:16px;width:2px;background:#569CD6;opacity:.5"></div><div class="mm" style="left:23px;top:16px;width:5px;background:#9CDCFE;opacity:.5"></div><div class="mm" style="left:28px;top:16px;width:1px;background:#CCCCCC;opacity:.5"></div><div class="mm" style="left:29px;top:16px;width:11px;background:#CE9178;opacity:.5"></div><div class="mm" style="left:41px;top:16px;width:11px;background:#CE9178;opacity:.5"></div><div class="mm" style="left:53px;top:16px;width:5px;background:#CE9178;opacity:.5"></div><div class="mm" style="left:58px;top:16px;width:1px;background:#808080;opacity:.5"></div><div class="mm" style="left:59px;top:16px;width:6px;background:#CCCCCC;opacity:.5"></div><div class="mm" style="left:66px;top:16px;width:4px;background:#CCCCCC;opacity:.5"></div><div class="mm" style="left:71px;top:16px;width:1px;background:#FFD700;opacity:.5"></div><div class="mm" style="left:72px;top:16px;width:1px;background:#DA70D6;opacity:.5"></div><div class="mm" style="left:74px;top:16px;width:6px;background:#9CDCFE;opacity:.5"></div><div class="mm" style="left:81px;top:16px;width:1px;background:#DA70D6;opacity:.5"></div><div class="mm" style="left:82px;top:16px;width:1px;background:#FFD700;opacity:.5"></div><div class="mm" style="left:83px;top:16px;width:2px;background:#808080;opacity:.5"></div><div class="mm" style="left:85px;top:16px;width:2px;background:#569CD6;opacity:.5"></div><div class="mm" style="left:87px;top:16px;width:1px;background:#808080;opacity:.5"></div><div class="mm" style="left:19px;top:18px;width:1px;background:#808080;opacity:.5"></div><div class="mm" style="left:20px;top:18px;width:3px;background:#569CD6;opacity:.5"></div><div class="mm" style="left:24px;top:18px;width:5px;background:#9CDCFE;opacity:.5"></div><div class="mm" style="left:29px;top:18px;width:1px;background:#CCCCCC;opacity:.5"></div><div class="mm" style="left:30px;top:18px;width:6px;background:#CE9178;opacity:.5"></div><div class="mm" style="left:36px;top:18px;width:1px;background:#808080;opacity:.5"></div><div class="mm" style="left:23px;top:20px;width:1px;background:#808080;opacity:.5"></div><div class="mm" style="left:24px;top:20px;width:3px;background:#569CD6;opacity:.5"></div><div class="mm" style="left:28px;top:20px;width:5px;background:#9CDCFE;opacity:.5"></div><div class="mm" style="left:33px;top:20px;width:1px;background:#CCCCCC;opacity:.5"></div><div class="mm" style="left:34px;top:20px;width:11px;background:#CE9178;opacity:.5"></div><div class="mm" style="left:45px;top:20px;width:1px;background:#808080;opacity:.5"></div><div class="mm" style="left:27px;top:22px;width:1px;background:#808080;opacity:.5"></div><div class="mm" style="left:28px;top:22px;width:4px;background:#569CD6;opacity:.5"></div><div class="mm" style="left:33px;top:22px;width:6px;background:#9CDCFE;opacity:.5"></div><div class="mm" style="left:39px;top:22px;width:1px;background:#CCCCCC;opacity:.5"></div><div class="mm" style="left:40px;top:22px;width:1px;background:#CE9178;opacity:.5"></div><div class="mm" style="left:41px;top:22px;width:2px;background:#D7BA7D;opacity:.5"></div><div class="mm" style="left:44px;top:22px;width:5px;background:#DCDCAA;opacity:.5"></div><div class="mm" style="left:49px;top:22px;width:18px;background:#CE9178;opacity:.5"></div><div class="mm" style="left:68px;top:22px;width:2px;background:#D7BA7D;opacity:.5"></div><div class="mm" style="left:70px;top:22px;width:1px;background:#CE9178;opacity:.5"></div><div class="mm" style="left:72px;top:22px;width:6px;background:#9CDCFE;opacity:.5"></div><div class="mm" style="left:78px;top:22px;width:1px;background:#CCCCCC;opacity:.5"></div><div class="mm" style="left:79px;top:22px;width:6px;background:#CE9178;opacity:.5"></div><div class="mm" style="left:85px;top:22px;width:1px;background:#808080;opacity:.5"></div><div class="mm" style="left:31px;top:24px;width:5px;background:#569CD6;opacity:.5"></div><div class="mm" style="left:7px;top:26px;width:102px;background:#203a55"></div><div class="mm" style="left:7px;top:26px;width:39px;background:#2d5e93"></div><div class="mm" style="left:7px;top:28px;width:102px;background:#203a55"></div><div class="mm" style="left:7px;top:28px;width:43px;background:#2d5e93"></div><div class="mm" style="left:7px;top:30px;width:102px;background:#203a55"></div><div class="mm" style="left:7px;top:30px;width:78px;background:#2d5e93"></div><div class="mm" style="left:7px;top:32px;width:102px;background:#203a55"></div><div class="mm" style="left:7px;top:32px;width:102px;background:#2d5e93"></div><div class="mm" style="left:7px;top:34px;width:102px;background:#203a55"></div><div class="mm" style="left:7px;top:34px;width:96px;background:#2d5e93"></div><div class="mm" style="left:7px;top:36px;width:102px;background:#203a55"></div><div class="mm" style="left:7px;top:36px;width:43px;background:#2d5e93"></div><div class="mm" style="left:7px;top:38px;width:102px;background:#203a55"></div><div class="mm" style="left:7px;top:38px;width:82px;background:#2d5e93"></div><div class="mm" style="left:7px;top:40px;width:102px;background:#203a55"></div><div class="mm" style="left:7px;top:40px;width:38px;background:#2d5e93"></div><div class="mm" style="left:7px;top:42px;width:30px;background:#2d5e93"></div><div class="mm" style="left:31px;top:46px;width:4px;background:#6A9955;opacity:.5"></div><div class="mm" style="left:36px;top:46px;width:6px;background:#6A9955;opacity:.5"></div><div class="mm" style="left:43px;top:46px;width:4px;background:#6A9955;opacity:.5"></div><div class="mm" style="left:31px;top:48px;width:1px;background:#808080;opacity:.5"></div><div class="mm" style="left:32px;top:48px;width:6px;background:#569CD6;opacity:.5"></div><div class="mm" style="left:39px;top:48px;width:4px;background:#9CDCFE;opacity:.5"></div><div class="mm" style="left:43px;top:48px;width:1px;background:#CCCCCC;opacity:.5"></div><div class="mm" style="left:44px;top:48px;width:8px;background:#CE9178;opacity:.5"></div><div class="mm" style="left:53px;top:48px;width:5px;background:#9CDCFE;opacity:.5"></div><div class="mm" style="left:58px;top:48px;width:1px;background:#CCCCCC;opacity:.5"></div><div class="mm" style="left:59px;top:48px;width:4px;background:#CE9178;opacity:.5"></div><div class="mm" style="left:64px;top:48px;width:12px;background:#CE9178;opacity:.5"></div><div class="mm" style="left:76px;top:48px;width:1px;background:#808080;opacity:.5"></div><div class="mm" style="left:77px;top:48px;width:6px;background:#CCCCCC;opacity:.5"></div><div class="mm" style="left:83px;top:48px;width:2px;background:#808080;opacity:.5"></div><div class="mm" style="left:85px;top:48px;width:6px;background:#569CD6;opacity:.5"></div><div class="mm" style="left:91px;top:48px;width:1px;background:#808080;opacity:.5"></div><div class="mm" style="left:31px;top:50px;width:1px;background:#808080;opacity:.5"></div><div class="mm" style="left:32px;top:50px;width:1px;background:#569CD6;opacity:.5"></div><div class="mm" style="left:34px;top:50px;width:4px;background:#9CDCFE;opacity:.5"></div><div class="mm" style="left:38px;top:50px;width:1px;background:#CCCCCC;opacity:.5"></div><div class="mm" style="left:39px;top:50px;width:1px;background:#CE9178;opacity:.5"></div><div class="mm" style="left:40px;top:50px;width:2px;background:#D7BA7D;opacity:.5"></div><div class="mm" style="left:43px;top:50px;width:5px;background:#DCDCAA;opacity:.5"></div><div class="mm" style="left:48px;top:50px;width:15px;background:#CE9178;opacity:.5"></div><div class="mm" style="left:64px;top:50px;width:2px;background:#D7BA7D;opacity:.5"></div><div class="mm" style="left:66px;top:50px;width:1px;background:#CE9178;opacity:.5"></div><div class="mm" style="left:68px;top:50px;width:5px;background:#9CDCFE;opacity:.5"></div><div class="mm" style="left:73px;top:50px;width:1px;background:#CCCCCC;opacity:.5"></div><div class="mm" style="left:74px;top:50px;width:4px;background:#CE9178;opacity:.5"></div><div class="mm" style="left:79px;top:50px;width:12px;background:#CE9178;opacity:.5"></div><div class="mm" style="left:91px;top:50px;width:1px;background:#808080;opacity:.5"></div><div class="mm" style="left:92px;top:50px;width:7px;background:#CCCCCC;opacity:.5"></div><div class="mm" style="left:99px;top:50px;width:2px;background:#808080;opacity:.5"></div><div class="mm" style="left:101px;top:50px;width:1px;background:#569CD6;opacity:.5"></div><div class="mm" style="left:102px;top:50px;width:1px;background:#808080;opacity:.5"></div><div class="mm" style="left:27px;top:54px;width:2px;background:#808080;opacity:.5"></div><div class="mm" style="left:29px;top:54px;width:4px;background:#569CD6;opacity:.5"></div><div class="mm" style="left:33px;top:54px;width:1px;background:#808080;opacity:.5"></div><div class="mm" style="left:23px;top:56px;width:2px;background:#808080;opacity:.5"></div><div class="mm" style="left:25px;top:56px;width:3px;background:#569CD6;opacity:.5"></div><div class="mm" style="left:28px;top:56px;width:1px;background:#808080;opacity:.5"></div><div class="mm" style="left:19px;top:58px;width:2px;background:#808080;opacity:.5"></div><div class="mm" style="left:21px;top:58px;width:3px;background:#569CD6;opacity:.5"></div><div class="mm" style="left:24px;top:58px;width:1px;background:#808080;opacity:.5"></div><div class="mm" style="left:15px;top:60px;width:2px;background:#808080;opacity:.5"></div><div class="mm" style="left:17px;top:60px;width:3px;background:#569CD6;opacity:.5"></div><div class="mm" style="left:20px;top:60px;width:1px;background:#808080;opacity:.5"></div><div class="mm" style="left:11px;top:62px;width:2px;background:#808080;opacity:.5"></div><div class="mm" style="left:13px;top:62px;width:3px;background:#569CD6;opacity:.5"></div><div class="mm" style="left:16px;top:62px;width:1px;background:#808080;opacity:.5"></div><div class="mm" style="left:7px;top:64px;width:11px;background:#569CD6;opacity:.5"></div><div class="mm" style="left:7px;top:68px;width:8px;background:#569CD6;opacity:.5"></div><div class="mm" style="left:15px;top:68px;width:1px;background:#FFD700;opacity:.5"></div><div class="mm" style="left:16px;top:68px;width:4px;background:#CE9178;opacity:.5"></div><div class="mm" style="left:20px;top:68px;width:1px;background:#FFD700;opacity:.5"></div><div class="mm" style="left:11px;top:70px;width:4px;background:#6A9955;opacity:.5"></div><div class="mm" style="left:16px;top:70px;width:2px;background:#6A9955;opacity:.5"></div><div class="mm" style="left:19px;top:70px;width:8px;background:#6A9955;opacity:.5"></div><div class="mm" style="left:28px;top:70px;width:4px;background:#6A9955;opacity:.5"></div><div class="mm" style="left:7px;top:72px;width:11px;background:#569CD6;opacity:.5"></div></div>
<svg style="left:9px;top:9px" width="17" height="16" viewBox="0 0 17 16" ><path d="M13.2,1.4 L1.8,11.4 M13.2,14.4 L1.8,4.6" stroke="#1f8ad2" stroke-width="2.5" stroke-linecap="round"/><path d="M12.4,0.2 L17,2.2 L17,13.8 L12.4,15.8 Z" fill="#2fa5ee"/></svg>
<div class="t" style="left:43px;top:1px;height:34px;line-height:34px;font-size:13px;color:#cccccc">File</div>
<div class="t" style="left:78px;top:1px;height:34px;line-height:34px;font-size:13px;color:#cccccc">Edit</div>
<div class="t" style="left:116px;top:1px;height:34px;line-height:34px;font-size:13px;color:#cccccc">Selection</div>
<div class="t" style="left:184px;top:1px;height:34px;line-height:34px;font-size:13px;color:#cccccc">View</div>
<div class="t" style="left:228px;top:1px;height:34px;line-height:34px;font-size:13px;color:#cccccc">Go</div>
<div class="t" style="left:260px;top:1px;height:34px;line-height:34px;font-size:13px;color:#cccccc">Run</div>
<svg style="left:302px;top:9px" width="16" height="16" viewBox="0 0 16 16" ><circle cx="3" cy="8" r="1.1" fill="#cccccc"/><circle cx="8" cy="8" r="1.1" fill="#cccccc"/><circle cx="13" cy="8" r="1.1" fill="#cccccc"/></svg>
<svg style="left:374px;top:9px" width="16" height="16" viewBox="0 0 16 16" ><path d="M14.5,8.5 H2.2 M7,3.6 L2.2,8.5 L7,13.4" fill="none" stroke="#cccccc" stroke-width="1.1"/></svg>
<svg style="left:400px;top:9px" width="16" height="16" viewBox="0 0 16 16" ><path d="M1.5,8.5 H13.8 M9,3.6 L13.8,8.5 L9,13.4" fill="none" stroke="#7a7a7a" stroke-width="1.1"/></svg>
<div class="a" style="left:429px;top:5px;width:521px;height:24px;border:1px solid #3a3a3a;border-radius:6px;background:#222222"></div>
<svg style="left:659px;top:10px" width="15" height="15" viewBox="0 0 15 15" ><circle cx="9" cy="5.6" r="4.4" fill="none" stroke="#cccccc" stroke-width="1.2"/><path d="M5.9,8.7 L1,13.6" stroke="#cccccc" stroke-width="1.3"/></svg>
<div class="t" style="left:679px;top:6px;height:24px;line-height:24px;font-size:13px;color:#cccccc;letter-spacing:-0.4px">siminlab</div>
<svg style="left:963px;top:9px" width="18" height="16" viewBox="0 0 18 16" ><path d="M1,4 H9 M1,4 V13 H4 V15.5 L6.6,13 H12 V9" fill="none" stroke="#cccccc" stroke-width="1.2" stroke-linejoin="round"/><path d="M12.5,0.5 Q13,4 16.5,4.5 Q13,5 12.5,8.5 Q12,5 8.5,4.5 Q12,4 12.5,0.5Z" fill="#cccccc"/></svg>
<svg style="left:983px;top:13px" width="10" height="8" viewBox="0 0 10 8" ><polyline points="1,2 4.5,5.5 8,2" fill="none" stroke="#cccccc" stroke-width="1.1"/></svg>
<svg style="left:1127px;top:10px" width="16" height="15" viewBox="0 0 16 15" ><rect x="1.5" y="1" width="5" height="12.5" rx="1" fill="none" stroke="#cccccc" stroke-width="1.1"/><rect x="9.5" y="1" width="4.5" height="4.5" rx="1" fill="none" stroke="#cccccc" stroke-width="1.1"/><rect x="9.5" y="8.8" width="4.5" height="4.5" rx="1" fill="none" stroke="#cccccc" stroke-width="1.1"/></svg>
<svg style="left:1153px;top:10px" width="16" height="15" viewBox="0 0 16 15" ><rect x="0.8" y="0.8" width="14.4" height="13" rx="1.2" fill="none" stroke="#cccccc" stroke-width="1.1"/><rect x="0.8" y="0.8" width="5.5" height="13" fill="#cccccc"/></svg>
<svg style="left:1179px;top:10px" width="16" height="15" viewBox="0 0 16 15" ><rect x="0.8" y="0.8" width="14.4" height="13" rx="1.2" fill="none" stroke="#cccccc" stroke-width="1.1"/><path d="M0.8,9.6 H15.2" stroke="#cccccc" stroke-width="1.1"/></svg>
<svg style="left:1205px;top:10px" width="16" height="15" viewBox="0 0 16 15" ><rect x="0.8" y="0.8" width="14.4" height="13" rx="1.2" fill="none" stroke="#cccccc" stroke-width="1.1"/><path d="M9.6,0.8 V13.8" stroke="#cccccc" stroke-width="1.1"/></svg>
<div class="a" style="left:1246px;top:16px;width:10px;height:1px;background:#cccccc;"></div>
<svg style="left:1291px;top:11px" width="12" height="12" viewBox="0 0 12 12" ><rect x="0.5" y="2.5" width="8" height="8" rx="1.2" fill="none" stroke="#cccccc" stroke-width="1"/><path d="M2.6,0.6 H9.5 Q11.4,0.6 11.4,2.5 V9.4" fill="none" stroke="#cccccc" stroke-width="1"/></svg>
<svg style="left:1337px;top:11px" width="12" height="12" viewBox="0 0 12 12" ><path d="M0.7,0.7 L11.3,11.3 M11.3,0.7 L0.7,11.3" stroke="#cccccc" stroke-width="1.05"/></svg>
<svg style="left:12px;top:47px" width="24" height="24" viewBox="0 0 24 24" ><path d="M0.8,7.75 L13.6,2.3 L23,9.6 L23,17.1 L9.9,22.1 L0.8,18.4 Z M0.8,7.75 L9.9,15.25 L23,9.6 M9.9,15.25 V22.1 M6.6,12.6 V20" fill="none" stroke="#868686" stroke-width="1.5" stroke-linejoin="round"/><path d="M13,15 V19.8 M15.5,14 V19 M18,13 V18 M20.3,12 V17" stroke="#868686" stroke-width="1.2"/></svg>
<svg style="left:12px;top:94px" width="24" height="24" viewBox="0 0 24 24" ><circle cx="8" cy="6.5" r="3.8" fill="none" stroke="#868686" stroke-width="1.6"/><circle cx="16" cy="6.5" r="3.8" fill="none" stroke="#868686" stroke-width="1.6"/><path d="M5,10.5 Q3.6,12 4,14 M20,9.5 Q22.5,12 21.5,15.5 Q20,19.5 13,19.5 Q9,19.5 7.5,18.5" fill="none" stroke="#868686" stroke-width="1.6"/><path d="M10,13 V16 M13,13 V16" stroke="#868686" stroke-width="1.6"/><path d="M1.5,16.5 L4.5,13.5 L6.5,17 M4.2,14 Q4,19.5 9,21.5" fill="none" stroke="#868686" stroke-width="1.5"/></svg>
<svg style="left:12px;top:143px" width="24" height="24" viewBox="0 0 24 24" ><path d="M1.6,2.5 H11 Q12,2.5 12,3.5 V20.5 H2.6 Q1.6,20.5 1.6,19.5 Z M22.4,2.5 H13 Q12,2.5 12,3.5 V20.5 H21.4 Q22.4,20.5 22.4,19.5 Z" fill="none" stroke="#868686" stroke-width="1.5"/><path d="M4.5,7 H9 M4.5,10.5 H9 M4.5,14 H9 M15,7 H19.5 M15,10.5 H19.5 M15,14 H19.5" stroke="#868686" stroke-width="1.5"/></svg>
<svg style="left:12px;top:191px" width="24" height="24" viewBox="0 0 24 24" ><path d="M7.8,1.8 H15.8 L21,7 V17.8 Q21,19 19.8,19 H9 Q7.8,19 7.8,17.8 Z M15.5,2 V7.2 H20.8" fill="none" stroke="#d7d7d7" stroke-width="1.6" stroke-linejoin="round"/><path d="M7.6,6.6 H3.2 Q2,6.6 2,7.8 V21.2 Q2,22.4 3.2,22.4 H13.2 Q14.4,22.4 14.4,21.2 V19.2" fill="none" stroke="#d7d7d7" stroke-width="1.6"/></svg>
<div class="a" style="left:0px;top:178px;width:2px;height:48px;background:#0078d4;"></div>
<svg style="left:12px;top:238px" width="24" height="24" viewBox="0 0 24 24" ><circle cx="15.2" cy="9" r="7.3" fill="none" stroke="#868686" stroke-width="1.6"/><path d="M10,14.4 L1.4,23.2" stroke="#868686" stroke-width="1.7"/></svg>
<svg style="left:12px;top:287px" width="24" height="24" viewBox="0 0 24 24" ><circle cx="6.75" cy="3.6" r="2.6" fill="none" stroke="#868686" stroke-width="1.5"/><circle cx="6.75" cy="20.2" r="2.6" fill="none" stroke="#868686" stroke-width="1.5"/><circle cx="17" cy="7.8" r="2.6" fill="none" stroke="#868686" stroke-width="1.5"/><path d="M6.75,6.2 V17.6 M16.2,10.3 Q15,13.6 12,13.6 H9.5 Q6.9,13.6 6.75,16" fill="none" stroke="#868686" stroke-width="1.5"/></svg>
<svg style="left:12px;top:335px" width="24" height="24" viewBox="0 0 24 24" ><path d="M8,2 L23,11 L12,17.5 M8,2 V10.5" fill="none" stroke="#868686" stroke-width="1.5" stroke-linejoin="round"/><ellipse cx="6" cy="17.5" rx="3.3" ry="4" fill="none" stroke="#868686" stroke-width="1.5"/><path d="M2.7,16.5 H9.3 M0.5,14.5 L2.8,15.8 M11.5,14.5 L9.2,15.8 M0.5,18.5 H2.7 M9.3,18.5 H11.5 M0.8,22.5 L3,20.5 M11.2,22.5 L9,20.5" fill="none" stroke="#868686" stroke-width="1.3"/></svg>
<svg style="left:12px;top:383px" width="24" height="24" viewBox="0 0 24 24" ><path d="M2.2,3.6 H11.6 V21.6 H2.2 Z M2.2,12.6 H20.8 V21.6 H11.6" fill="none" stroke="#868686" stroke-width="1.5"/><path d="M18.4,1.2 L23.6,6.4 L18.4,11.6 L13.2,6.4 Z" fill="none" stroke="#868686" stroke-width="1.5" stroke-linejoin="round"/></svg>
<div class="a" style="left:24px;top:395px;width:16px;height:16px;border-radius:8px;background:#0078d4"></div><svg style="left:24px;top:395px" width="16" height="16" viewBox="0 0 16 16" ><path d="M6.2,5.6 L8.6,4 H9.6 V12.2 H8.1 V6 L6.2,7.1 Z" fill="#ffffff"/></svg>
<svg style="left:12px;top:432px" width="24" height="24" viewBox="0 0 24 24" ><path d="M9.5,15.2 H1.8 V2 H22 V10" fill="none" stroke="#868686" stroke-width="1.5"/><path d="M5.5,18.5 H10" stroke="#868686" stroke-width="1.5"/><circle cx="17.2" cy="16.2" r="5.6" fill="none" stroke="#868686" stroke-width="1.5"/><path d="M14.8,14.6 L16.2,16.2 L14.8,17.8 M19.6,14.6 L18.2,16.2 L19.6,17.8" fill="none" stroke="#868686" stroke-width="1"/></svg>
<svg style="left:12px;top:476px" width="23" height="31" viewBox="0 0 23 31" ><path d="M15.1,0.2 L15.1,6.4 L12.3,7.9 L22.7,14.3 L22.7,19.8 L7.1,30.2 L7.1,24.2 L10.9,21.7 L0,15.3 L0,9.4 Z" fill="#8f8f8f"/><path d="M5.2,11.8 L6.6,10.7 L17.5,17.5 L16.2,18.8 Z" fill="#1a1a1a"/><path d="M9.8,8.6 L12.3,7.9 L11.5,10.4Z M13.2,22.6 L10.9,21.7 L11.4,19.6Z" fill="#6a6a6a"/></svg>
<svg style="left:12px;top:660px" width="24" height="24" viewBox="0 0 24 24" ><circle cx="12" cy="12" r="10.8" fill="none" stroke="#868686" stroke-width="1.5"/><circle cx="12" cy="9.2" r="3.9" fill="none" stroke="#868686" stroke-width="1.5"/><path d="M5,19.5 Q7,14.8 12,14.8 Q17,14.8 19,19.5" fill="none" stroke="#868686" stroke-width="1.5"/></svg>
<div class="a" style="left:24px;top:672px;width:16px;height:16px;border-radius:8px;background:#0078d4"></div><svg style="left:24px;top:672px" width="16" height="16" viewBox="0 0 16 16" ><path d="M6.2,5.6 L8.6,4 H9.6 V12.2 H8.1 V6 L6.2,7.1 Z" fill="#ffffff"/></svg>
<svg style="left:12px;top:708px" width="24" height="24" viewBox="0 0 24 24" ><path d="M23.09,9.84 L23.09,14.16 L19.71,14.80 L19.43,15.47 L21.37,18.32 L18.32,21.37 L15.47,19.43 L14.80,19.71 L14.16,23.09 L9.84,23.09 L9.20,19.71 L8.53,19.43 L5.68,21.37 L2.63,18.32 L4.57,15.47 L4.29,14.80 L0.91,14.16 L0.91,9.84 L4.29,9.20 L4.57,8.53 L2.63,5.68 L5.68,2.63 L8.53,4.57 L9.20,4.29 L9.84,0.91 L14.16,0.91 L14.80,4.29 L15.47,4.57 L18.32,2.63 L21.37,5.68 L19.43,8.53 L19.71,9.20 Z" fill="none" stroke="#868686" stroke-width="1.5" stroke-linejoin="round"/><circle cx="12" cy="12" r="3" fill="none" stroke="#868686" stroke-width="1.5"/></svg>
<div class="t" style="left:68px;top:36px;height:35px;line-height:35px;font-size:11px;color:#cccccc;transform:scaleX(0.86);transform-origin:0 0">EXPLORER</div>
<svg style="left:246px;top:45px" width="16" height="16" viewBox="0 0 16 16" ><circle cx="3" cy="8" r="1.1" fill="#cccccc"/><circle cx="8" cy="8" r="1.1" fill="#cccccc"/><circle cx="13" cy="8" r="1.1" fill="#cccccc"/></svg>
<svg style="left:50px;top:73px" width="16" height="16" viewBox="0 0 16 16" ><polyline points="3.2,5.8 8,10.6 12.8,5.8" fill="none" stroke="#cccccc" stroke-width="1.1"/></svg>
<div class="t" style="left:68px;top:71px;height:22px;line-height:22px;font-size:11px;font-weight:bold;color:#cccccc">SIMINLAB</div>
<div class="a" style="left:48px;top:136px;width:229px;height:564px;overflow:hidden">
<svg style="left:32px;top:-11px" width="12" height="13" viewBox="0 0 12 13" ><path d="M4.4,1.2 Q2.4,1.2 2.4,2.8 V4.8 Q2.4,6 1,6.2 Q2.4,6.4 2.4,7.6 V9.6 Q2.4,11.2 4.4,11.2 M7.6,1.2 Q9.6,1.2 9.6,2.8 V4.8 Q9.6,6 11,6.2 Q9.6,6.4 9.6,7.6 V9.6 Q9.6,11.2 7.6,11.2" fill="none" stroke="#cbcb41" stroke-width="1.9"/></svg>
<div class="tree" style="left:50px;top:-14px">package-lock.json</div>
<svg style="left:32px;top:11px" width="12" height="13" viewBox="0 0 12 13" ><path d="M4.4,1.2 Q2.4,1.2 2.4,2.8 V4.8 Q2.4,6 1,6.2 Q2.4,6.4 2.4,7.6 V9.6 Q2.4,11.2 4.4,11.2 M7.6,1.2 Q9.6,1.2 9.6,2.8 V4.8 Q9.6,6 11,6.2 Q9.6,6.4 9.6,7.6 V9.6 Q9.6,11.2 7.6,11.2" fill="none" stroke="#cbcb41" stroke-width="1.9"/></svg>
<div class="tree" style="left:50px;top:8px">package.json</div>
<svg style="left:32px;top:34px" width="13" height="13" viewBox="0 0 13 13" ><circle cx="6.5" cy="6.5" r="5.8" fill="none" stroke="#519aba" stroke-width="1.2"/><rect x="5.7" y="5.2" width="1.7" height="4.6" fill="#519aba"/><circle cx="6.5" cy="3.4" r="1" fill="#519aba"/></svg>
<div class="tree" style="left:50px;top:30px">README.md</div>
<svg style="left:24px;top:55.5px" width="13" height="13" viewBox="0 0 13 13" ><rect x="5" y="0.2" width="3" height="3" rx="0.5" fill="#6d8086" transform="rotate(0 6.5 6.5)"/><rect x="5" y="0.2" width="3" height="3" rx="0.5" fill="#6d8086" transform="rotate(45 6.5 6.5)"/><rect x="5" y="0.2" width="3" height="3" rx="0.5" fill="#6d8086" transform="rotate(90 6.5 6.5)"/><rect x="5" y="0.2" width="3" height="3" rx="0.5" fill="#6d8086" transform="rotate(135 6.5 6.5)"/><rect x="5" y="0.2" width="3" height="3" rx="0.5" fill="#6d8086" transform="rotate(180 6.5 6.5)"/><rect x="5" y="0.2" width="3" height="3" rx="0.5" fill="#6d8086" transform="rotate(225 6.5 6.5)"/><rect x="5" y="0.2" width="3" height="3" rx="0.5" fill="#6d8086" transform="rotate(270 6.5 6.5)"/><rect x="5" y="0.2" width="3" height="3" rx="0.5" fill="#6d8086" transform="rotate(315 6.5 6.5)"/><circle cx="6.5" cy="6.5" r="4.6" fill="#6d8086"/><circle cx="6.5" cy="6.5" r="1.8" fill="#181818"/></svg>
<div class="tree" style="left:42px;top:52px">.htaccess</div>
<svg style="left:24px;top:77.5px" width="13" height="13" viewBox="0 0 13 13" ><polygon points="6.30,0.30 7.95,4.33 12.29,4.65 8.96,7.47 10.00,11.70 6.30,9.40 2.60,11.70 3.64,7.47 0.31,4.65 4.65,4.33" fill="#cbcb41"/></svg>
<div class="tree" style="left:42px;top:74px">favicon.ico</div>
<svg style="left:27px;top:101px" width="10" height="11" viewBox="0 0 10 11" ><path d="M0.5,1 H8 M0.5,3.8 H9.5 M0.5,6.6 H7 M0.5,9.4 H9.5" stroke="#c5c5c5" stroke-width="1.4"/></svg>
<div class="tree" style="left:42px;top:96px">hot</div>
<svg style="left:24px;top:123px" width="13" height="10" viewBox="0 0 13 10" ><circle cx="3.6" cy="3.4" r="3.1" fill="#a77bd4"/><ellipse cx="8.6" cy="4" rx="4.3" ry="3.6" fill="#a77bd4"/><path d="M0.6,3.6 L0.6,8.2 Q0.8,9.6 2.6,9.4 L2.6,8 L2,8 L2,4.6 Z" fill="#a77bd4"/><rect x="4.6" y="5" width="2.6" height="4.8" fill="#a77bd4"/><rect x="9.6" y="5" width="2.8" height="4.8" fill="#a77bd4"/><path d="M5.4,1.2 Q4.4,3.2 5.6,5.6" fill="none" stroke="#00000055" stroke-width="0.8"/></svg>
<div class="tree" style="left:42px;top:118px">index.php</div>
<svg style="left:27px;top:145px" width="10" height="11" viewBox="0 0 10 11" ><path d="M0.5,1 H8 M0.5,3.8 H9.5 M0.5,6.6 H7 M0.5,9.4 H9.5" stroke="#c5c5c5" stroke-width="1.4"/></svg>
<div class="tree" style="left:42px;top:140px">robots.txt</div>
<svg style="left:15px;top:164px" width="16" height="16" viewBox="0 0 16 16" ><polyline points="3.2,5.8 8,10.6 12.8,5.8" fill="none" stroke="#cccccc" stroke-width="1.1"/></svg>
<div class="tree" style="left:34px;top:162px">resources</div>
<svg style="left:23px;top:186px" width="16" height="16" viewBox="0 0 16 16" ><polyline points="5.8,3.2 10.6,8 5.8,12.8" fill="none" stroke="#cccccc" stroke-width="1.1"/></svg>
<div class="tree" style="left:42px;top:184px">css</div>
<svg style="left:23px;top:208px" width="16" height="16" viewBox="0 0 16 16" ><polyline points="5.8,3.2 10.6,8 5.8,12.8" fill="none" stroke="#cccccc" stroke-width="1.1"/></svg>
<div class="tree" style="left:42px;top:206px">js</div>
<svg style="left:23px;top:230px" width="16" height="16" viewBox="0 0 16 16" ><polyline points="3.2,5.8 8,10.6 12.8,5.8" fill="none" stroke="#cccccc" stroke-width="1.1"/></svg>
<div class="tree" style="left:42px;top:228px">views</div>
<svg style="left:31px;top:252px" width="16" height="16" viewBox="0 0 16 16" ><polyline points="3.2,5.8 8,10.6 12.8,5.8" fill="none" stroke="#cccccc" stroke-width="1.1"/></svg>
<div class="tree" style="left:50px;top:250px">admin</div>
<svg style="left:39px;top:274px" width="16" height="16" viewBox="0 0 16 16" ><polyline points="3.2,5.8 8,10.6 12.8,5.8" fill="none" stroke="#cccccc" stroke-width="1.1"/></svg>
<div class="tree" style="left:58px;top:272px">category</div>
<div class="a" style="left:0;top:293px;width:229px;height:22px;background:#37373d"></div>
<svg style="left:48px;top:299px" width="13" height="10" viewBox="0 0 13 10" ><circle cx="3.6" cy="3.4" r="3.1" fill="#a77bd4"/><ellipse cx="8.6" cy="4" rx="4.3" ry="3.6" fill="#a77bd4"/><path d="M0.6,3.6 L0.6,8.2 Q0.8,9.6 2.6,9.4 L2.6,8 L2,8 L2,4.6 Z" fill="#a77bd4"/><rect x="4.6" y="5" width="2.6" height="4.8" fill="#a77bd4"/><rect x="9.6" y="5" width="2.8" height="4.8" fill="#a77bd4"/><path d="M5.4,1.2 Q4.4,3.2 5.6,5.6" fill="none" stroke="#00000055" stroke-width="0.8"/></svg>
<div class="tree" style="left:66px;top:294px">create.blade.php</div>
<svg style="left:48px;top:321px" width="13" height="10" viewBox="0 0 13 10" ><circle cx="3.6" cy="3.4" r="3.1" fill="#a77bd4"/><ellipse cx="8.6" cy="4" rx="4.3" ry="3.6" fill="#a77bd4"/><path d="M0.6,3.6 L0.6,8.2 Q0.8,9.6 2.6,9.4 L2.6,8 L2,8 L2,4.6 Z" fill="#a77bd4"/><rect x="4.6" y="5" width="2.6" height="4.8" fill="#a77bd4"/><rect x="9.6" y="5" width="2.8" height="4.8" fill="#a77bd4"/><path d="M5.4,1.2 Q4.4,3.2 5.6,5.6" fill="none" stroke="#00000055" stroke-width="0.8"/></svg>
<div class="tree" style="left:66px;top:316px">edit.blade.php</div>
<svg style="left:48px;top:343px" width="13" height="10" viewBox="0 0 13 10" ><circle cx="3.6" cy="3.4" r="3.1" fill="#a77bd4"/><ellipse cx="8.6" cy="4" rx="4.3" ry="3.6" fill="#a77bd4"/><path d="M0.6,3.6 L0.6,8.2 Q0.8,9.6 2.6,9.4 L2.6,8 L2,8 L2,4.6 Z" fill="#a77bd4"/><rect x="4.6" y="5" width="2.6" height="4.8" fill="#a77bd4"/><rect x="9.6" y="5" width="2.8" height="4.8" fill="#a77bd4"/><path d="M5.4,1.2 Q4.4,3.2 5.6,5.6" fill="none" stroke="#00000055" stroke-width="0.8"/></svg>
<div class="tree" style="left:66px;top:338px">index.blade.php</div>
<svg style="left:39px;top:362px" width="16" height="16" viewBox="0 0 16 16" ><polyline points="3.2,5.8 8,10.6 12.8,5.8" fill="none" stroke="#cccccc" stroke-width="1.1"/></svg>
<div class="tree" style="left:58px;top:360px">dashboard</div>
<svg style="left:48px;top:387px" width="13" height="10" viewBox="0 0 13 10" ><circle cx="3.6" cy="3.4" r="3.1" fill="#a77bd4"/><ellipse cx="8.6" cy="4" rx="4.3" ry="3.6" fill="#a77bd4"/><path d="M0.6,3.6 L0.6,8.2 Q0.8,9.6 2.6,9.4 L2.6,8 L2,8 L2,4.6 Z" fill="#a77bd4"/><rect x="4.6" y="5" width="2.6" height="4.8" fill="#a77bd4"/><rect x="9.6" y="5" width="2.8" height="4.8" fill="#a77bd4"/><path d="M5.4,1.2 Q4.4,3.2 5.6,5.6" fill="none" stroke="#00000055" stroke-width="0.8"/></svg>
<div class="tree" style="left:66px;top:382px">index.blade.php</div>
<svg style="left:39px;top:406px" width="16" height="16" viewBox="0 0 16 16" ><polyline points="3.2,5.8 8,10.6 12.8,5.8" fill="none" stroke="#cccccc" stroke-width="1.1"/></svg>
<div class="tree" style="left:58px;top:404px">layouts</div>
<svg style="left:48px;top:431px" width="13" height="10" viewBox="0 0 13 10" ><circle cx="3.6" cy="3.4" r="3.1" fill="#a77bd4"/><ellipse cx="8.6" cy="4" rx="4.3" ry="3.6" fill="#a77bd4"/><path d="M0.6,3.6 L0.6,8.2 Q0.8,9.6 2.6,9.4 L2.6,8 L2,8 L2,4.6 Z" fill="#a77bd4"/><rect x="4.6" y="5" width="2.6" height="4.8" fill="#a77bd4"/><rect x="9.6" y="5" width="2.8" height="4.8" fill="#a77bd4"/><path d="M5.4,1.2 Q4.4,3.2 5.6,5.6" fill="none" stroke="#00000055" stroke-width="0.8"/></svg>
<div class="tree" style="left:66px;top:426px">app.blade.php</div>
<svg style="left:48px;top:453px" width="13" height="10" viewBox="0 0 13 10" ><circle cx="3.6" cy="3.4" r="3.1" fill="#a77bd4"/><ellipse cx="8.6" cy="4" rx="4.3" ry="3.6" fill="#a77bd4"/><path d="M0.6,3.6 L0.6,8.2 Q0.8,9.6 2.6,9.4 L2.6,8 L2,8 L2,4.6 Z" fill="#a77bd4"/><rect x="4.6" y="5" width="2.6" height="4.8" fill="#a77bd4"/><rect x="9.6" y="5" width="2.8" height="4.8" fill="#a77bd4"/><path d="M5.4,1.2 Q4.4,3.2 5.6,5.6" fill="none" stroke="#00000055" stroke-width="0.8"/></svg>
<div class="tree" style="left:66px;top:448px">header.blade.php</div>
<svg style="left:48px;top:475px" width="13" height="10" viewBox="0 0 13 10" ><circle cx="3.6" cy="3.4" r="3.1" fill="#a77bd4"/><ellipse cx="8.6" cy="4" rx="4.3" ry="3.6" fill="#a77bd4"/><path d="M0.6,3.6 L0.6,8.2 Q0.8,9.6 2.6,9.4 L2.6,8 L2,8 L2,4.6 Z" fill="#a77bd4"/><rect x="4.6" y="5" width="2.6" height="4.8" fill="#a77bd4"/><rect x="9.6" y="5" width="2.8" height="4.8" fill="#a77bd4"/><path d="M5.4,1.2 Q4.4,3.2 5.6,5.6" fill="none" stroke="#00000055" stroke-width="0.8"/></svg>
<div class="tree" style="left:66px;top:470px">sidebar.blade.php</div>
<svg style="left:39px;top:494px" width="16" height="16" viewBox="0 0 16 16" ><polyline points="3.2,5.8 8,10.6 12.8,5.8" fill="none" stroke="#cccccc" stroke-width="1.1"/></svg>
<div class="tree" style="left:58px;top:492px">users</div>
<svg style="left:48px;top:519px" width="13" height="10" viewBox="0 0 13 10" ><circle cx="3.6" cy="3.4" r="3.1" fill="#a77bd4"/><ellipse cx="8.6" cy="4" rx="4.3" ry="3.6" fill="#a77bd4"/><path d="M0.6,3.6 L0.6,8.2 Q0.8,9.6 2.6,9.4 L2.6,8 L2,8 L2,4.6 Z" fill="#a77bd4"/><rect x="4.6" y="5" width="2.6" height="4.8" fill="#a77bd4"/><rect x="9.6" y="5" width="2.8" height="4.8" fill="#a77bd4"/><path d="M5.4,1.2 Q4.4,3.2 5.6,5.6" fill="none" stroke="#00000055" stroke-width="0.8"/></svg>
<div class="tree" style="left:66px;top:514px">create.blade.php</div>
<svg style="left:48px;top:541px" width="13" height="10" viewBox="0 0 13 10" ><circle cx="3.6" cy="3.4" r="3.1" fill="#a77bd4"/><ellipse cx="8.6" cy="4" rx="4.3" ry="3.6" fill="#a77bd4"/><path d="M0.6,3.6 L0.6,8.2 Q0.8,9.6 2.6,9.4 L2.6,8 L2,8 L2,4.6 Z" fill="#a77bd4"/><rect x="4.6" y="5" width="2.6" height="4.8" fill="#a77bd4"/><rect x="9.6" y="5" width="2.8" height="4.8" fill="#a77bd4"/><path d="M5.4,1.2 Q4.4,3.2 5.6,5.6" fill="none" stroke="#00000055" stroke-width="0.8"/></svg>
<div class="tree" style="left:66px;top:536px">edit.blade.php</div>
<svg style="left:48px;top:563px" width="13" height="10" viewBox="0 0 13 10" ><circle cx="3.6" cy="3.4" r="3.1" fill="#a77bd4"/><ellipse cx="8.6" cy="4" rx="4.3" ry="3.6" fill="#a77bd4"/><path d="M0.6,3.6 L0.6,8.2 Q0.8,9.6 2.6,9.4 L2.6,8 L2,8 L2,4.6 Z" fill="#a77bd4"/><rect x="4.6" y="5" width="2.6" height="4.8" fill="#a77bd4"/><rect x="9.6" y="5" width="2.8" height="4.8" fill="#a77bd4"/><path d="M5.4,1.2 Q4.4,3.2 5.6,5.6" fill="none" stroke="#00000055" stroke-width="0.8"/></svg>
<div class="tree" style="left:66px;top:558px">index.blade.php</div>
<div class="a" style="left:44px;top:293px;width:1px;height:66px;background:#585858"></div>
</div>
<div class="a" style="left:48px;top:92px;width:229px;height:44px;background:#181818;"></div>
<svg style="left:63px;top:95px" width="16" height="16" viewBox="0 0 16 16" ><polyline points="3.2,5.8 8,10.6 12.8,5.8" fill="none" stroke="#cccccc" stroke-width="1.1"/></svg>
<div class="tree" style="left:82px;top:93px">public</div>
<svg style="left:71px;top:117px" width="16" height="16" viewBox="0 0 16 16" ><polyline points="3.2,5.8 8,10.6 12.8,5.8" fill="none" stroke="#cccccc" stroke-width="1.1"/></svg>
<div class="tree" style="left:90px;top:115px">template-admin</div>
<div class="a" style="left:48px;top:136px;width:229px;height:3px;background:linear-gradient(#000000c0,#00000000)"></div>
<div class="a" style="left:48px;top:700px;width:229px;height:1px;background:#2b2b2b;"></div>
<div class="a" style="left:48px;top:722px;width:229px;height:1px;background:#2b2b2b;"></div>
<svg style="left:50px;top:703px" width="16" height="16" viewBox="0 0 16 16" ><polyline points="5.8,3.2 10.6,8 5.8,12.8" fill="none" stroke="#cccccc" stroke-width="1.1"/></svg>
<svg style="left:50px;top:725px" width="16" height="16" viewBox="0 0 16 16" ><polyline points="5.8,3.2 10.6,8 5.8,12.8" fill="none" stroke="#cccccc" stroke-width="1.1"/></svg>
<div class="t" style="left:68px;top:701px;height:22px;line-height:22px;font-size:11px;font-weight:bold;color:#cccccc">OUTLINE</div>
<div class="t" style="left:68px;top:723px;height:22px;line-height:22px;font-size:11px;font-weight:bold;color:#cccccc">TIMELINE</div>
<div class="a" style="left:473px;top:35px;width:1px;height:34px;background:#2b2b2b;"></div>
<div class="a" style="left:474px;top:35px;width:220px;height:35px;background:#1f1f1f;"></div>
<div class="a" style="left:474px;top:35px;width:220px;height:1px;background:#0078d4;"></div>
<div class="a" style="left:693px;top:35px;width:1px;height:34px;background:#2b2b2b;"></div>
<div class="a" style="left:895px;top:35px;width:1px;height:34px;background:#2b2b2b;"></div>
<svg style="left:291px;top:47px" width="13" height="10" viewBox="0 0 13 10" ><circle cx="3.6" cy="3.4" r="3.1" fill="#a77bd4"/><ellipse cx="8.6" cy="4" rx="4.3" ry="3.6" fill="#a77bd4"/><path d="M0.6,3.6 L0.6,8.2 Q0.8,9.6 2.6,9.4 L2.6,8 L2,8 L2,4.6 Z" fill="#a77bd4"/><rect x="4.6" y="5" width="2.6" height="4.8" fill="#a77bd4"/><rect x="9.6" y="5" width="2.8" height="4.8" fill="#a77bd4"/><path d="M5.4,1.2 Q4.4,3.2 5.6,5.6" fill="none" stroke="#00000055" stroke-width="0.8"/></svg>
<div class="t" style="left:310px;top:37px;height:34px;line-height:34px;font-size:13px;color:#9d9d9d">CategoryController.php</div>
<svg style="left:487px;top:47px" width="13" height="10" viewBox="0 0 13 10" ><circle cx="3.6" cy="3.4" r="3.1" fill="#a77bd4"/><ellipse cx="8.6" cy="4" rx="4.3" ry="3.6" fill="#a77bd4"/><path d="M0.6,3.6 L0.6,8.2 Q0.8,9.6 2.6,9.4 L2.6,8 L2,8 L2,4.6 Z" fill="#a77bd4"/><rect x="4.6" y="5" width="2.6" height="4.8" fill="#a77bd4"/><rect x="9.6" y="5" width="2.8" height="4.8" fill="#a77bd4"/><path d="M5.4,1.2 Q4.4,3.2 5.6,5.6" fill="none" stroke="#00000055" stroke-width="0.8"/></svg>
<div class="t" style="left:506px;top:37px;height:34px;line-height:34px;font-size:13px;color:#ffffff">create.blade.php</div>
<div class="t" style="left:607px;top:37px;height:34px;line-height:34px;font-size:12px;color:#9d9d9d">...\category</div>
<svg style="left:674px;top:49px" width="10" height="10" viewBox="0 0 10 10" ><path d="M0.6,0.6 L9.4,9.4 M9.4,0.6 L0.6,9.4" stroke="#ffffff" stroke-width="1.2"/></svg>
<svg style="left:707px;top:47px" width="13" height="10" viewBox="0 0 13 10" ><circle cx="3.6" cy="3.4" r="3.1" fill="#a77bd4"/><ellipse cx="8.6" cy="4" rx="4.3" ry="3.6" fill="#a77bd4"/><path d="M0.6,3.6 L0.6,8.2 Q0.8,9.6 2.6,9.4 L2.6,8 L2,8 L2,4.6 Z" fill="#a77bd4"/><rect x="4.6" y="5" width="2.6" height="4.8" fill="#a77bd4"/><rect x="9.6" y="5" width="2.8" height="4.8" fill="#a77bd4"/><path d="M5.4,1.2 Q4.4,3.2 5.6,5.6" fill="none" stroke="#00000055" stroke-width="0.8"/></svg>
<div class="t" style="left:726px;top:37px;height:34px;line-height:34px;font-size:13px;color:#9d9d9d">create.blade.php</div>
<div class="t" style="left:827px;top:37px;height:34px;line-height:34px;font-size:12px;color:#7d7d7d">...\users</div>
<svg style="left:1284px;top:45px" width="14" height="15" viewBox="0 0 14 15" ><path d="M1.5,1.2 L12.5,7.5 L1.5,13.8 Z" fill="none" stroke="#cccccc" stroke-width="1.2" stroke-linejoin="round"/></svg>
<svg style="left:1310px;top:45px" width="16" height="15" viewBox="0 0 16 15" ><rect x="0.7" y="0.7" width="14" height="13.6" rx="1.2" fill="none" stroke="#cccccc" stroke-width="1.2"/><path d="M7.7,0.7 V14.3" stroke="#cccccc" stroke-width="1.2"/></svg>
<svg style="left:1335px;top:45px" width="16" height="16" viewBox="0 0 16 16" ><circle cx="3" cy="8" r="1.1" fill="#cccccc"/><circle cx="8" cy="8" r="1.1" fill="#cccccc"/><circle cx="13" cy="8" r="1.1" fill="#cccccc"/></svg>
<svg style="left:354px;top:75.5px" width="7" height="11" viewBox="0 0 7 11" ><path d="M0.6,0.6 L5.8,5.4 L0.6,10.2" fill="none" stroke="#a9a9a9" stroke-width="1.1"/></svg>
<svg style="left:401px;top:75.5px" width="7" height="11" viewBox="0 0 7 11" ><path d="M0.6,0.6 L5.8,5.4 L0.6,10.2" fill="none" stroke="#a9a9a9" stroke-width="1.1"/></svg>
<svg style="left:452px;top:75.5px" width="7" height="11" viewBox="0 0 7 11" ><path d="M0.6,0.6 L5.8,5.4 L0.6,10.2" fill="none" stroke="#a9a9a9" stroke-width="1.1"/></svg>
<svg style="left:521px;top:75.5px" width="7" height="11" viewBox="0 0 7 11" ><path d="M0.6,0.6 L5.8,5.4 L0.6,10.2" fill="none" stroke="#a9a9a9" stroke-width="1.1"/></svg>
<svg style="left:652px;top:75.5px" width="7" height="11" viewBox="0 0 7 11" ><path d="M0.6,0.6 L5.8,5.4 L0.6,10.2" fill="none" stroke="#a9a9a9" stroke-width="1.1"/></svg>
<svg style="left:732px;top:75.5px" width="7" height="11" viewBox="0 0 7 11" ><path d="M0.6,0.6 L5.8,5.4 L0.6,10.2" fill="none" stroke="#a9a9a9" stroke-width="1.1"/></svg>
<svg style="left:846px;top:75.5px" width="7" height="11" viewBox="0 0 7 11" ><path d="M0.6,0.6 L5.8,5.4 L0.6,10.2" fill="none" stroke="#a9a9a9" stroke-width="1.1"/></svg>
<svg style="left:926px;top:75.5px" width="7" height="11" viewBox="0 0 7 11" ><path d="M0.6,0.6 L5.8,5.4 L0.6,10.2" fill="none" stroke="#a9a9a9" stroke-width="1.1"/></svg>
<svg style="left:1040px;top:75.5px" width="7" height="11" viewBox="0 0 7 11" ><path d="M0.6,0.6 L5.8,5.4 L0.6,10.2" fill="none" stroke="#a9a9a9" stroke-width="1.1"/></svg>
<div class="bc" style="left:294px">resources</div>
<div class="bc" style="left:366px">views</div>
<div class="bc" style="left:412px">admin</div>
<div class="bc" style="left:464px">category</div>
<svg style="left:533px;top:76px" width="13" height="10" viewBox="0 0 13 10" ><circle cx="3.6" cy="3.4" r="3.1" fill="#a77bd4"/><ellipse cx="8.6" cy="4" rx="4.3" ry="3.6" fill="#a77bd4"/><path d="M0.6,3.6 L0.6,8.2 Q0.8,9.6 2.6,9.4 L2.6,8 L2,8 L2,4.6 Z" fill="#a77bd4"/><rect x="4.6" y="5" width="2.6" height="4.8" fill="#a77bd4"/><rect x="9.6" y="5" width="2.8" height="4.8" fill="#a77bd4"/><path d="M5.4,1.2 Q4.4,3.2 5.6,5.6" fill="none" stroke="#00000055" stroke-width="0.8"/></svg>
<div class="bc" style="left:552px">create.blade.php</div>
<svg style="left:663px;top:73px" width="16" height="16" viewBox="0 0 16 16" ><path fill="#75beff" d="M14.45 4.5l-5-2.5h-.9l-7 3.5-.55.89v4.5l.55.9 5 2.5h.9l7-3.5.55-.9v-4.5l-.55-.89zm-8 8.64l-4.5-2.25V7.17l4.5 2v3.97zm.5-4.8L2.29 6.230l6.66-3.34 4.67 2.34-6.67 3.11zm7 1.55l-6.5 3.25V9.21l6.5-3.1v4.78z"/></svg>
<div class="bc" style="left:682px">div.card</div>
<svg style="left:743px;top:73px" width="16" height="16" viewBox="0 0 16 16" ><path fill="#75beff" d="M14.45 4.5l-5-2.5h-.9l-7 3.5-.55.89v4.5l.55.9 5 2.5h.9l7-3.5.55-.9v-4.5l-.55-.89zm-8 8.64l-4.5-2.25V7.17l4.5 2v3.97zm.5-4.8L2.29 6.230l6.66-3.34 4.67 2.34-6.67 3.11zm7 1.55l-6.5 3.25V9.21l6.5-3.1v4.78z"/></svg>
<div class="bc" style="left:762px">div.card-body</div>
<svg style="left:857px;top:73px" width="16" height="16" viewBox="0 0 16 16" ><path fill="#75beff" d="M14.45 4.5l-5-2.5h-.9l-7 3.5-.55.89v4.5l.55.9 5 2.5h.9l7-3.5.55-.9v-4.5l-.55-.89zm-8 8.64l-4.5-2.25V7.17l4.5 2v3.97zm.5-4.8L2.29 6.230l6.66-3.34 4.67 2.34-6.67 3.11zm7 1.55l-6.5 3.25V9.21l6.5-3.1v4.78z"/></svg>
<div class="bc" style="left:876px">div.card</div>
<svg style="left:937px;top:73px" width="16" height="16" viewBox="0 0 16 16" ><path fill="#75beff" d="M14.45 4.5l-5-2.5h-.9l-7 3.5-.55.89v4.5l.55.9 5 2.5h.9l7-3.5.55-.9v-4.5l-.55-.89zm-8 8.64l-4.5-2.25V7.17l4.5 2v3.97zm.5-4.8L2.29 6.230l6.66-3.34 4.67 2.34-6.67 3.11zm7 1.55l-6.5 3.25V9.21l6.5-3.1v4.78z"/></svg>
<div class="bc" style="left:956px">div.card-body</div>
<svg style="left:1051px;top:73px" width="16" height="16" viewBox="0 0 16 16" ><path fill="#75beff" d="M14.45 4.5l-5-2.5h-.9l-7 3.5-.55.89v4.5l.55.9 5 2.5h.9l7-3.5.55-.9v-4.5l-.55-.89zm-8 8.64l-4.5-2.25V7.17l4.5 2v3.97zm.5-4.8L2.29 6.230l6.66-3.34 4.67 2.34-6.67 3.11zm7 1.55l-6.5 3.25V9.21l6.5-3.1v4.78z"/></svg>
<div class="bc" style="left:1070px">form</div>
<svg style="left:10px;top:748px" width="15" height="15" viewBox="0 0 15 15" ><path d="M2.2,4.4 L7,8.6 L2.2,12.9 M11.5,1 L7.5,4.8 L11.5,8.6" fill="none" stroke="#ffffff" stroke-width="1.3"/></svg>
<svg style="left:42px;top:749px" width="14" height="14" viewBox="0 0 14 14" ><circle cx="7" cy="7" r="6" fill="none" stroke="#cccccc" stroke-width="1.1"/><path d="M4.5,4.5 L9.5,9.5 M9.5,4.5 L4.5,9.5" stroke="#cccccc" stroke-width="1.1"/></svg>
<svg style="left:70px;top:749px" width="14" height="14" viewBox="0 0 14 14" ><path d="M7,1 L13.3,12.8 H0.7 Z" fill="none" stroke="#cccccc" stroke-width="1.1" stroke-linejoin="round"/><path d="M7,5 V9.5" stroke="#cccccc" stroke-width="1.1"/></svg>
<svg style="left:111px;top:749px" width="10" height="14" viewBox="0 0 10 14" ><path d="M6.5,0.8 L1.5,7.5 H4.8 L3.2,13 L8.5,6 H5.2 Z" fill="none" stroke="#cccccc" stroke-width="1"/></svg>
<div class="sb" style="left:59px">0</div>
<div class="sb" style="left:86px">0</div>
<div class="sb" style="left:789px">Ln 14, Col 1 (573 selected)</div>
<div class="sb" style="left:943px">Spaces: 4</div>
<div class="sb" style="left:1008px">UTF-8</div>
<div class="sb" style="left:1056px">CRLF</div>
<div class="sb" style="left:1118px">Blade</div>
<div class="sb" style="left:1210px">Go Live</div>
<div class="sb" style="left:1283px">Prettier</div>
<div class="sb" style="left:1098px;font-size:12px;letter-spacing:2px">{}</div>
<svg style="left:1162px;top:748px" width="16" height="14" viewBox="0 0 16 14" ><circle cx="4.6" cy="4" r="3.4" fill="#cccccc"/><circle cx="10.6" cy="4" r="3.4" fill="#cccccc"/><rect x="0.4" y="5.2" width="14.8" height="8" rx="4" fill="#cccccc"/><circle cx="4.6" cy="3.6" r="1.6" fill="#181818"/><circle cx="10.6" cy="3.6" r="1.6" fill="#181818"/><rect x="3.6" y="7.4" width="8" height="3.8" fill="#181818"/><rect x="5.8" y="7.8" width="1.2" height="3" fill="#cccccc"/><rect x="8.4" y="7.8" width="1.2" height="3" fill="#cccccc"/></svg>
<svg style="left:1193px;top:748px" width="13" height="15" viewBox="0 0 13 15" ><path d="M3.09,10.06 A5.3,5.3 0 1 1 9.91,10.06 M4.7,8.14 A2.8,2.8 0 1 1 8.3,8.14" fill="none" stroke="#cccccc" stroke-width="1.2"/><path d="M6.5,5.5 Q7.6,5.5 7.4,7 L7.1,13.6 H5.9 L5.6,7 Q5.4,5.5 6.5,5.5Z" fill="#cccccc"/></svg>
<svg style="left:1265px;top:749px" width="14" height="14" viewBox="0 0 14 14" ><circle cx="7" cy="7" r="6" fill="none" stroke="#cccccc" stroke-width="1.2"/><path d="M2.8,11.2 L11.2,2.8" stroke="#cccccc" stroke-width="1.2"/></svg>
<svg style="left:1337px;top:748px" width="14" height="15" viewBox="0 0 14 15" ><path d="M2.5,11 V6.5 Q2.5,1.5 7,1.5 Q11.5,1.5 11.5,6.5 V11 H1 H13" fill="none" stroke="#cccccc" stroke-width="1.2"/><path d="M5.2,12.6 Q7,14.8 8.8,12.6" fill="none" stroke="#cccccc" stroke-width="1.2"/></svg>
</body></html>
